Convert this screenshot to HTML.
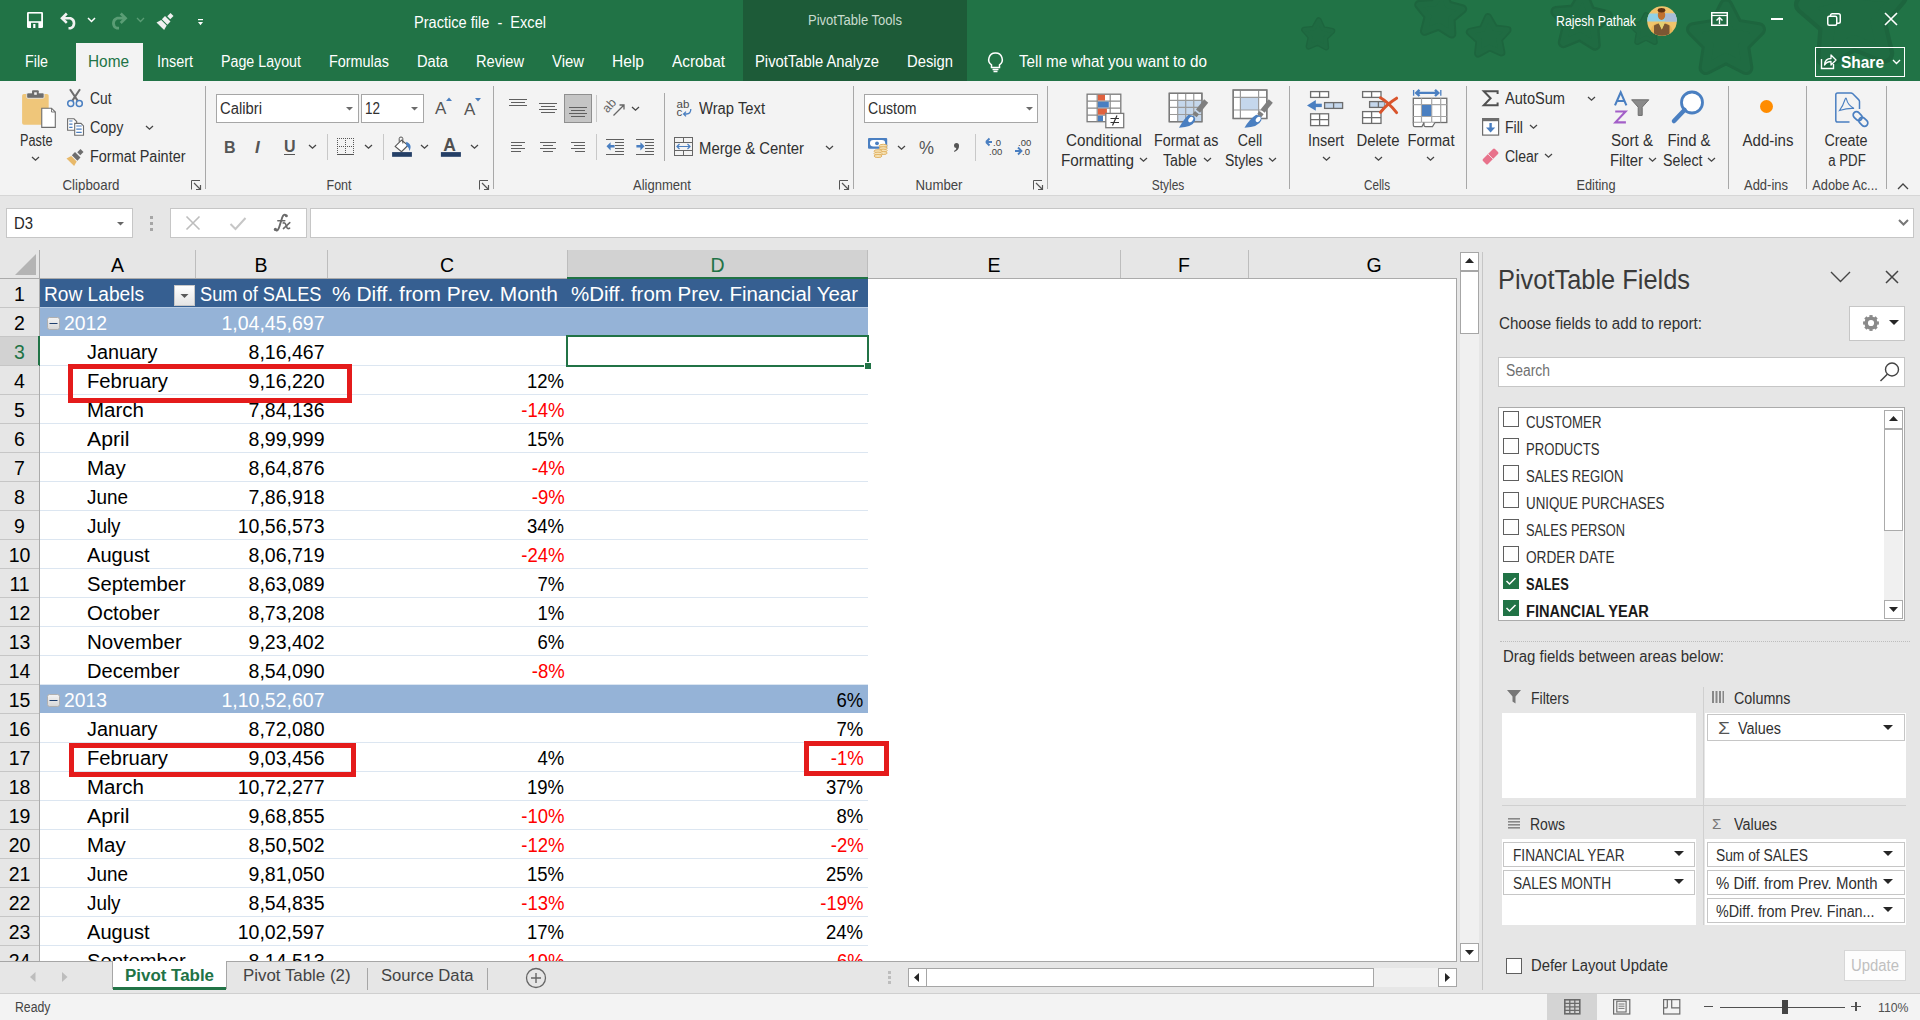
<!DOCTYPE html><html><head><meta charset="utf-8"><title>Practice file - Excel</title><style>
html,body{margin:0;padding:0;width:1920px;height:1020px;overflow:hidden;background:#e6e6e6;font-family:'Liberation Sans',sans-serif;}
.a{position:absolute;}
.t{white-space:pre;}
svg.a{overflow:visible;}
</style></head><body>
<div class="a" style="left:0px;top:0px;width:1920px;height:81px;background:#217346;"></div>
<svg class="a" style="left:960px;top:0px;overflow:hidden;" width="960" height="81" viewBox="0 0 960 81" ><g transform="translate(-960,0)"><path d="M1318.7,20.3 L1322.7,29.1 L1332.2,31.1 L1325.1,37.7 L1326.1,47.4 L1317.6,42.6 L1308.7,46.5 L1310.7,37.0 L1304.2,29.7 L1313.9,28.7Z" fill="#1e6840" stroke="#1d653e" stroke-width="6.1" stroke-linejoin="round"/><path d="M1318.7,20.3 L1322.7,29.1 L1332.2,31.1 L1325.1,37.7 L1326.1,47.4 L1317.6,42.6 L1308.7,46.5 L1310.7,37.0 L1304.2,29.7 L1313.9,28.7Z" fill="#1f6b42" stroke="#1f6b42" stroke-width="3.6" stroke-linejoin="round"/><path d="M1442.3,-8.8 L1447.8,5.2 L1462.4,9.1 L1450.8,18.7 L1451.6,33.8 L1438.8,25.7 L1424.7,31.1 L1428.5,16.5 L1419.0,4.8 L1434.1,3.8Z" fill="#1e6840" stroke="#1d653e" stroke-width="9.5" stroke-linejoin="round"/><path d="M1442.3,-8.8 L1447.8,5.2 L1462.4,9.1 L1450.8,18.7 L1451.6,33.8 L1438.8,25.7 L1424.7,31.1 L1428.5,16.5 L1419.0,4.8 L1434.1,3.8Z" fill="#1f6b42" stroke="#1f6b42" stroke-width="5.6" stroke-linejoin="round"/><path d="M1488.0,17.3 L1494.5,28.6 L1507.4,30.0 L1498.7,39.6 L1501.3,52.3 L1489.5,47.1 L1478.2,53.5 L1479.6,40.6 L1470.0,31.9 L1482.7,29.2Z" fill="#1e6840" stroke="#1d653e" stroke-width="8.2" stroke-linejoin="round"/><path d="M1488.0,17.3 L1494.5,28.6 L1507.4,30.0 L1498.7,39.6 L1501.3,52.3 L1489.5,47.1 L1478.2,53.5 L1479.6,40.6 L1470.0,31.9 L1482.7,29.2Z" fill="#1f6b42" stroke="#1f6b42" stroke-width="4.8" stroke-linejoin="round"/><path d="M1583.2,-5.0 L1590.0,11.5 L1607.3,15.7 L1593.8,27.3 L1595.1,45.1 L1579.9,35.8 L1563.4,42.6 L1567.5,25.2 L1556.0,11.6 L1573.8,10.2Z" fill="#1e6840" stroke="#1d653e" stroke-width="11.2" stroke-linejoin="round"/><path d="M1583.2,-5.0 L1590.0,11.5 L1607.3,15.7 L1593.8,27.3 L1595.1,45.1 L1579.9,35.8 L1563.4,42.6 L1567.5,25.2 L1556.0,11.6 L1573.8,10.2Z" fill="#1f6b42" stroke="#1f6b42" stroke-width="6.6" stroke-linejoin="round"/><path d="M1646.0,15.2 L1650.4,23.9 L1660.0,25.4 L1653.2,32.3 L1654.7,41.9 L1646.0,37.6 L1637.3,41.9 L1638.8,32.3 L1632.0,25.4 L1641.6,23.9Z" fill="#1e6840" stroke="#1d653e" stroke-width="6.1" stroke-linejoin="round"/><path d="M1646.0,15.2 L1650.4,23.9 L1660.0,25.4 L1653.2,32.3 L1654.7,41.9 L1646.0,37.6 L1637.3,41.9 L1638.8,32.3 L1632.0,25.4 L1641.6,23.9Z" fill="#1f6b42" stroke="#1f6b42" stroke-width="3.6" stroke-linejoin="round"/><path d="M1726.0,5.6 L1736.4,25.7 L1758.8,29.4 L1742.8,45.5 L1746.2,67.9 L1726.0,57.6 L1705.8,67.9 L1709.2,45.5 L1693.2,29.4 L1715.6,25.7Z" fill="#1e6840" stroke="#1d653e" stroke-width="14.3" stroke-linejoin="round"/><path d="M1726.0,5.6 L1736.4,25.7 L1758.8,29.4 L1742.8,45.5 L1746.2,67.9 L1726.0,57.6 L1705.8,67.9 L1709.2,45.5 L1693.2,29.4 L1715.6,25.7Z" fill="#1f6b42" stroke="#1f6b42" stroke-width="8.4" stroke-linejoin="round"/><path d="M1848.1,-33.0 L1865.1,-5.5 L1897.4,-2.9 L1876.5,21.8 L1884.0,53.4 L1854.0,41.1 L1826.4,58.0 L1828.7,25.7 L1804.1,4.6 L1835.6,-3.1Z" fill="#1e6840" stroke="#1d653e" stroke-width="20.4" stroke-linejoin="round"/><path d="M1848.1,-33.0 L1865.1,-5.5 L1897.4,-2.9 L1876.5,21.8 L1884.0,53.4 L1854.0,41.1 L1826.4,58.0 L1828.7,25.7 L1804.1,4.6 L1835.6,-3.1Z" fill="#1f6b42" stroke="#1f6b42" stroke-width="12.0" stroke-linejoin="round"/></g></svg>
<div class="a" style="left:743px;top:0px;width:224px;height:81px;background:#1d5b38;"></div>
<div class="a t" id="f0" style="top:13.00px;font-size:14px;line-height:14px;color:#c9dccf;left:855px;transform:translateX(-50%) scaleX(0.9314);transform-origin:center;">PivotTable Tools</div>
<svg class="a" style="left:27px;top:12px;" width="16" height="16" viewBox="0 0 16 16" ><rect x="0" y="0" width="16" height="16" rx="1.2" fill="#fff"/><rect x="1.8" y="1.6" width="12.4" height="7.6" fill="#217346"/><rect x="4" y="10.8" width="7.4" height="5.2" fill="#217346"/><rect x="6.2" y="12" width="2.2" height="4" fill="#fff"/></svg>
<svg class="a" style="left:60px;top:12px;" width="19" height="17" viewBox="0 0 19 17" ><path d="M2.5,6.2 H10.5 A5.3,5.3 0 0 1 10.5,16.2 H8.5" fill="none" stroke="#f2f2f2" stroke-width="2.6"/><path d="M6.8,1.5 L2,6.2 L6.8,10.9" fill="none" stroke="#f2f2f2" stroke-width="2.6"/></svg>
<svg class="a" style="left:87px;top:16.5px;" width="10" height="6" viewBox="0 0 10 6" ><path d="M1,1 L4.5,4.5 L8,1" fill="none" stroke="#fff" stroke-width="1.5"/></svg>
<svg class="a" style="left:108px;top:12px;" width="20" height="17" viewBox="0 0 20 17" ><path d="M17,6.2 H9 A5.3,5.3 0 0 0 9,16.2 H11" fill="none" stroke="#5a9d75" stroke-width="2.8"/><path d="M12.7,1.5 L17.5,6.2 L12.7,10.9" fill="none" stroke="#5a9d75" stroke-width="2.8"/></svg>
<svg class="a" style="left:135.5px;top:16.5px;" width="10" height="6" viewBox="0 0 10 6" ><path d="M1,1 L4.5,4.5 L8,1" fill="none" stroke="#5a9d75" stroke-width="1.3"/></svg>
<svg class="a" style="left:157px;top:12px;" width="18" height="16" viewBox="0 0 18 16" ><g transform="translate(9.2,8.4) rotate(-45)"><path d="M-8.3,-5.4 L-3.2,-3.9 V3.9 L-8.3,5.4 Z" fill="#f0f0f0"/><rect x="-2.2" y="-3.9" width="4.4" height="7.8" fill="#f0f0f0"/><rect x="3.6" y="-2.1" width="4.6" height="4.2" fill="#f0f0f0"/></g></svg>
<svg class="a" style="left:197px;top:18px;" width="7" height="8" viewBox="0 0 7 8" ><rect x="1" y="1" width="5" height="1.2" fill="#fff"/><path d="M1,4 H6 L3.5,7.2 Z" fill="#fff"/></svg>
<div class="a t" id="f1" style="top:14.00px;font-size:16.5px;line-height:16.5px;color:#fff;left:414px;transform:scaleX(0.8831);transform-origin:left;">Practice file  -  Excel</div>
<div class="a t" id="f2" style="top:14.00px;font-size:14px;line-height:14px;color:#fff;left:1556px;transform:scaleX(0.8785);transform-origin:left;">Rajesh Pathak</div>
<svg class="a" style="left:1647px;top:6px;" width="30" height="30" viewBox="0 0 30 30" ><defs><clipPath id="cav"><circle cx="15" cy="15" r="14.8"/></clipPath></defs><g clip-path="url(#cav)"><rect width="30" height="30" fill="#f0c46c"/><rect x="0" y="7.5" width="30" height="8" fill="#8fd0e6"/><rect x="18" y="7.5" width="12" height="8" fill="#a9bcd6"/><path d="M3,30 Q3,18.5 10,17 H19 Q26,18.5 26,30 Z" fill="#e9b456"/><path d="M7,30 V19.5 Q9.5,18 12,17.5 L14.8,23.5 L17.5,17.5 Q20,18 22.5,19.5 V30 Z" fill="#7b5733"/><path d="M11.5,16.5 L14.8,23.5 L18,16.5 Z" fill="#e2cf72"/><ellipse cx="14.5" cy="9" rx="3.7" ry="5" fill="#c0702e"/><ellipse cx="14.5" cy="4.2" rx="3.8" ry="2.2" fill="#5b3212"/></g></svg>
<svg class="a" style="left:1711px;top:12px;" width="17" height="14" viewBox="0 0 17 14" ><rect x="0.75" y="0.75" width="15.5" height="12.5" fill="none" stroke="#fff" stroke-width="1.5"/><path d="M0.75,3.5 H16" stroke="#fff" stroke-width="1.2"/><path d="M8.5,12 V6 M5.5,8.5 L8.5,5.5 L11.5,8.5" fill="none" stroke="#fff" stroke-width="1.4"/></svg>
<div class="a" style="left:1771px;top:18px;width:12px;height:1.5px;background:#fff;"></div>
<svg class="a" style="left:1827px;top:13px;" width="14" height="13" viewBox="0 0 14 13" ><rect x="0.75" y="3.25" width="9" height="9" fill="none" stroke="#fff" stroke-width="1.5" rx="1.5"/><path d="M3.5,3 V2.5 A1.75,1.75 0 0 1 5.25,0.75 H11.5 A1.75,1.75 0 0 1 13.25,2.5 V8.5 A1.75,1.75 0 0 1 11.5,10.25 H10" fill="none" stroke="#fff" stroke-width="1.5"/></svg>
<svg class="a" style="left:1884px;top:12px;" width="14" height="14" viewBox="0 0 14 14" ><path d="M1,1 L13,13 M13,1 L1,13" stroke="#fff" stroke-width="1.6"/></svg>
<div class="a" style="left:76px;top:43px;width:67px;height:38px;background:#f3f3f3;"></div>
<div class="a t" id="f3" style="top:54.00px;font-size:16px;line-height:16px;color:#fff;left:25px;transform:scaleX(0.8921);transform-origin:left;">File</div>
<div class="a t" id="f4" style="top:54.00px;font-size:16px;line-height:16px;color:#217346;left:88px;transform:scaleX(0.9605);transform-origin:left;">Home</div>
<div class="a t" id="f5" style="top:54.00px;font-size:16px;line-height:16px;color:#fff;left:157px;transform:scaleX(0.8996);transform-origin:left;">Insert</div>
<div class="a t" id="f6" style="top:54.00px;font-size:16px;line-height:16px;color:#fff;left:221px;transform:scaleX(0.8903);transform-origin:left;">Page Layout</div>
<div class="a t" id="f7" style="top:54.00px;font-size:16px;line-height:16px;color:#fff;left:329px;transform:scaleX(0.8997);transform-origin:left;">Formulas</div>
<div class="a t" id="f8" style="top:54.00px;font-size:16px;line-height:16px;color:#fff;left:417px;transform:scaleX(0.9172);transform-origin:left;">Data</div>
<div class="a t" id="f9" style="top:54.00px;font-size:16px;line-height:16px;color:#fff;left:476px;transform:scaleX(0.9148);transform-origin:left;">Review</div>
<div class="a t" id="f10" style="top:54.00px;font-size:16px;line-height:16px;color:#fff;left:552px;transform:scaleX(0.9305);transform-origin:left;">View</div>
<div class="a t" id="f11" style="top:54.00px;font-size:16px;line-height:16px;color:#fff;left:612px;transform:scaleX(0.9725);transform-origin:left;">Help</div>
<div class="a t" id="f12" style="top:54.00px;font-size:16px;line-height:16px;color:#fff;left:672px;transform:scaleX(0.9612);transform-origin:left;">Acrobat</div>
<div class="a t" id="f13" style="top:54.00px;font-size:16px;line-height:16px;color:#fff;left:755px;transform:scaleX(0.9232);transform-origin:left;">PivotTable Analyze</div>
<div class="a t" id="f14" style="top:54.00px;font-size:16px;line-height:16px;color:#fff;left:907px;transform:scaleX(0.9235);transform-origin:left;">Design</div>
<svg class="a" style="left:987px;top:52px;" width="17" height="21" viewBox="0 0 17 21" ><path d="M8.5,1 A6.5,6.5 0 0 0 4.5,12.8 V15.5 H12.5 V12.8 A6.5,6.5 0 0 0 8.5,1 Z" fill="none" stroke="#fff" stroke-width="1.5"/><path d="M5.5,17.5 H11.5 M6.5,19.5 H10.5" stroke="#fff" stroke-width="1.4"/></svg>
<div class="a t" id="f15" style="top:54.00px;font-size:16px;line-height:16px;color:#fff;left:1019px;transform:scaleX(0.9522);transform-origin:left;">Tell me what you want to do</div>
<div class="a" style="left:1815px;top:47px;width:90px;height:30px;border:1px solid #fff;box-sizing:border-box;"></div>
<svg class="a" style="left:1820px;top:53px;" width="17" height="17" viewBox="0 0 17 17" ><path d="M1.5,6 V15.5 H13.5 V11" fill="none" stroke="#fff" stroke-width="1.4"/><path d="M4.5,12 Q5,5.5 11,5.5 V2 L16,7 L11,12 V8.5 Q7,8.5 4.5,12 Z" fill="none" stroke="#fff" stroke-width="1.3" stroke-linejoin="round"/></svg>
<div class="a t" id="f16" style="top:54.00px;font-size:17px;line-height:17px;color:#fff;font-weight:700;left:1841px;transform:scaleX(0.9101);transform-origin:left;">Share</div>
<svg class="a" style="left:1892px;top:59px;" width="9" height="6" viewBox="0 0 9 6" ><path d="M1,1 L4.5,4.5 L8,1" fill="none" stroke="#fff" stroke-width="1.4"/></svg>
<div class="a" style="left:0px;top:81px;width:1920px;height:114px;background:#f3f3f3;"></div>
<div class="a" style="left:0px;top:195px;width:1920px;height:1px;background:#d6d6d6;"></div>
<div class="a" style="left:205px;top:86px;width:1px;height:103px;background:#a8a8a8;"></div>
<div class="a" style="left:493px;top:86px;width:1px;height:103px;background:#a8a8a8;"></div>
<div class="a" style="left:853px;top:86px;width:1px;height:103px;background:#a8a8a8;"></div>
<div class="a" style="left:1047px;top:86px;width:1px;height:103px;background:#a8a8a8;"></div>
<div class="a" style="left:1289px;top:86px;width:1px;height:103px;background:#a8a8a8;"></div>
<div class="a" style="left:1466px;top:86px;width:1px;height:103px;background:#a8a8a8;"></div>
<div class="a" style="left:1728px;top:86px;width:1px;height:103px;background:#a8a8a8;"></div>
<div class="a" style="left:1806px;top:86px;width:1px;height:103px;background:#a8a8a8;"></div>
<div class="a" style="left:1886px;top:86px;width:1px;height:103px;background:#a8a8a8;"></div>
<div class="a t" id="f17" style="top:178.00px;font-size:14.5px;line-height:14.5px;color:#444444;left:91px;transform:translateX(-50%) scaleX(0.9182);transform-origin:center;">Clipboard</div>
<div class="a t" id="f18" style="top:178.00px;font-size:14.5px;line-height:14.5px;color:#444444;left:338.5px;transform:translateX(-50%) scaleX(0.8616);transform-origin:center;">Font</div>
<div class="a t" id="f19" style="top:178.00px;font-size:14.5px;line-height:14.5px;color:#444444;left:662px;transform:translateX(-50%) scaleX(0.8994);transform-origin:center;">Alignment</div>
<div class="a t" id="f20" style="top:178.00px;font-size:14.5px;line-height:14.5px;color:#444444;left:939px;transform:translateX(-50%) scaleX(0.9112);transform-origin:center;">Number</div>
<div class="a t" id="f21" style="top:178.00px;font-size:14.5px;line-height:14.5px;color:#444444;left:1167.5px;transform:translateX(-50%) scaleX(0.8228);transform-origin:center;">Styles</div>
<div class="a t" id="f22" style="top:178.00px;font-size:14.5px;line-height:14.5px;color:#444444;left:1376.5px;transform:translateX(-50%) scaleX(0.8066);transform-origin:center;">Cells</div>
<div class="a t" id="f23" style="top:178.00px;font-size:14.5px;line-height:14.5px;color:#444444;left:1596px;transform:translateX(-50%) scaleX(0.8795);transform-origin:center;">Editing</div>
<div class="a t" id="f24" style="top:178.00px;font-size:14.5px;line-height:14.5px;color:#444444;left:1766px;transform:translateX(-50%) scaleX(0.8948);transform-origin:center;">Add-ins</div>
<div class="a t" id="f25" style="top:178.00px;font-size:14.5px;line-height:14.5px;color:#444444;left:1845px;transform:translateX(-50%) scaleX(0.8831);transform-origin:center;">Adobe Ac...</div>
<svg class="a" style="left:191px;top:180px;" width="11" height="10" viewBox="0 0 11 10" ><path d="M0.5,9.5 V0.5 H9" fill="none" stroke="#555" stroke-width="1"/><path d="M3,3 L9,9 M5,9.5 H9.5 V5" fill="none" stroke="#555" stroke-width="1.2"/></svg>
<svg class="a" style="left:479px;top:180px;" width="11" height="10" viewBox="0 0 11 10" ><path d="M0.5,9.5 V0.5 H9" fill="none" stroke="#555" stroke-width="1"/><path d="M3,3 L9,9 M5,9.5 H9.5 V5" fill="none" stroke="#555" stroke-width="1.2"/></svg>
<svg class="a" style="left:839px;top:180px;" width="11" height="10" viewBox="0 0 11 10" ><path d="M0.5,9.5 V0.5 H9" fill="none" stroke="#555" stroke-width="1"/><path d="M3,3 L9,9 M5,9.5 H9.5 V5" fill="none" stroke="#555" stroke-width="1.2"/></svg>
<svg class="a" style="left:1033px;top:180px;" width="11" height="10" viewBox="0 0 11 10" ><path d="M0.5,9.5 V0.5 H9" fill="none" stroke="#555" stroke-width="1"/><path d="M3,3 L9,9 M5,9.5 H9.5 V5" fill="none" stroke="#555" stroke-width="1.2"/></svg>
<svg class="a" style="left:1897px;top:183px;" width="12" height="7" viewBox="0 0 12 7" ><path d="M1,6 L6,1 L11,6" fill="none" stroke="#444" stroke-width="1.3"/></svg>
<svg class="a" style="left:20px;top:88px;" width="38" height="42" viewBox="0 0 38 42" ><rect x="2.1" y="6" width="26.6" height="30.8" rx="1.8" fill="#efc67a"/><rect x="6.7" y="4.9" width="17.4" height="5.4" rx="1.2" fill="#6d6d6d" stroke="#f3f3f3" stroke-width="0.8"/><rect x="12" y="2.2" width="6.75" height="4.5" rx="1" fill="#6d6d6d"/><rect x="14.2" y="4.3" width="2.6" height="2.5" fill="#f3f3f3"/><path d="M21.75,20.2 H31.5 L35.3,24 V39.4 H21.75 Z" fill="#fff" stroke="#6d6d6d" stroke-width="1.1"/><path d="M31.5,20.2 V24 H35.3" fill="none" stroke="#6d6d6d" stroke-width="0.9"/></svg>
<div class="a t" id="f26" style="top:133.00px;font-size:16px;line-height:16px;color:#303030;left:19.5px;transform:scaleX(0.7942);transform-origin:left;">Paste</div>
<svg class="a" style="left:31px;top:156px;" width="9" height="6" viewBox="0 0 9 6" ><path d="M1,1 L4.5,4.15 L8,1" fill="none" stroke="#444" stroke-width="1.3"/></svg>
<svg class="a" style="left:66px;top:88px;" width="18" height="20" viewBox="0 0 18 20" ><path d="M4,1.2 L11.6,12.6 M14,1.2 L6.4,12.6" stroke="#6d6d6d" stroke-width="2"/><circle cx="4.7" cy="15.5" r="3" fill="none" stroke="#4a7fc1" stroke-width="1.5"/><circle cx="13.3" cy="15.5" r="3" fill="none" stroke="#4a7fc1" stroke-width="1.5"/></svg>
<div class="a t" id="f27" style="top:91.00px;font-size:16px;line-height:16px;color:#303030;left:90px;transform:scaleX(0.8632);transform-origin:left;">Cut</div>
<svg class="a" style="left:66px;top:117px;" width="19" height="20" viewBox="0 0 19 20" ><path d="M1.6,1.8 H8 L10.7,4.5 V13.2 H1.6 Z" fill="#fff" stroke="#6d6d6d" stroke-width="1.1"/><path d="M8.7,6.4 H15 L17.5,8.9 V18.2 H8.7 Z" fill="#fff" stroke="#6d6d6d" stroke-width="1.1"/><path d="M3.2,4 H6.5 M3.2,7.2 H6.5 M3.2,10.3 H6.5 M10.25,9 H15.7 M10.25,12.2 H15.7 M10.25,15.3 H15.7" stroke="#4a7fc1" stroke-width="1.2"/></svg>
<div class="a t" id="f28" style="top:120.00px;font-size:16px;line-height:16px;color:#303030;left:90px;transform:scaleX(0.8967);transform-origin:left;">Copy</div>
<svg class="a" style="left:145px;top:125px;" width="9" height="6" viewBox="0 0 9 6" ><path d="M1,1 L4.5,4.15 L8,1" fill="none" stroke="#444" stroke-width="1.3"/></svg>
<svg class="a" style="left:66.6px;top:147.5px;" width="18" height="16" viewBox="0 0 18 16" ><g transform="translate(9.2,8.4) rotate(-45)"><path d="M-8.3,-5.4 L-3.2,-3.9 V3.9 L-8.3,5.4 Z" fill="#e8b96a"/><rect x="-2.2" y="-3.9" width="4.4" height="7.8" fill="#6d6d6d"/><rect x="3.6" y="-2.1" width="4.6" height="4.2" fill="#6d6d6d"/></g></svg>
<div class="a t" id="f29" style="top:149.00px;font-size:16px;line-height:16px;color:#303030;left:90px;transform:scaleX(0.9025);transform-origin:left;">Format Painter</div>
<div class="a" style="left:216px;top:94px;width:143px;height:29px;background:#fff;border:1px solid #a6a6a6;box-sizing:border-box;"></div>
<div class="a t" id="f30" style="top:101.00px;font-size:16px;line-height:16px;color:#303030;left:219.5px;transform:scaleX(0.9263);transform-origin:left;">Calibri</div>
<svg class="a" style="left:346px;top:107px;" width="8" height="4" viewBox="0 0 8 4" ><path d="M0,0 H7 L3.5,3.5 Z" fill="#6b6b6b"/></svg>
<div class="a" style="left:361px;top:94px;width:63px;height:29px;background:#fff;border:1px solid #a6a6a6;box-sizing:border-box;"></div>
<div class="a t" id="f31" style="top:101.00px;font-size:16px;line-height:16px;color:#303030;left:365px;transform:scaleX(0.8428);transform-origin:left;">12</div>
<svg class="a" style="left:411px;top:107px;" width="8" height="4" viewBox="0 0 8 4" ><path d="M0,0 H7 L3.5,3.5 Z" fill="#6b6b6b"/></svg>
<svg class="a" style="left:434px;top:97px;" width="18" height="18" viewBox="0 0 18 18" ><text x="1" y="17" font-family="Liberation Sans" font-size="17" fill="#555">A</text><path d="M12,4 L15,0.5 L18,4 Z" fill="#4a7fc1"/></svg>
<svg class="a" style="left:463px;top:97px;" width="18" height="18" viewBox="0 0 18 18" ><text x="1" y="17.5" font-family="Liberation Sans" font-size="17" fill="#555">A</text><path d="M12,1 L15,4.5 L18,1 Z" fill="#4a7fc1"/></svg>
<div class="a t" style="top:139.50px;font-size:16px;line-height:16px;color:#555;font-weight:700;left:224px;">B</div>
<div class="a t" style="top:138.50px;font-size:17px;line-height:17px;color:#555;font-weight:700;left:255px;font-style:italic;font-family:"Liberation Serif";">I</div>
<div class="a t" style="top:138.50px;font-size:16px;line-height:16px;color:#555;font-weight:700;left:284px;">U</div>
<div class="a" style="left:284px;top:154px;width:11px;height:1.3px;background:#555;"></div>
<svg class="a" style="left:308px;top:144px;" width="9" height="6" viewBox="0 0 9 6" ><path d="M1,1 L4.5,4.15 L8,1" fill="none" stroke="#444" stroke-width="1.3"/></svg>
<div class="a" style="left:327px;top:134px;width:1px;height:26px;background:#c8c8c8;"></div>
<svg class="a" style="left:336px;top:137px;" width="20" height="19" viewBox="0 0 20 19" ><rect x="1" y="1" width="1" height="1" fill="#555"/><rect x="1" y="9" width="1" height="1" fill="#555"/><rect x="3" y="1" width="1" height="1" fill="#555"/><rect x="3" y="9" width="1" height="1" fill="#555"/><rect x="5" y="1" width="1" height="1" fill="#555"/><rect x="5" y="9" width="1" height="1" fill="#555"/><rect x="7" y="1" width="1" height="1" fill="#555"/><rect x="7" y="9" width="1" height="1" fill="#555"/><rect x="9" y="1" width="1" height="1" fill="#555"/><rect x="9" y="9" width="1" height="1" fill="#555"/><rect x="11" y="1" width="1" height="1" fill="#555"/><rect x="11" y="9" width="1" height="1" fill="#555"/><rect x="13" y="1" width="1" height="1" fill="#555"/><rect x="13" y="9" width="1" height="1" fill="#555"/><rect x="15" y="1" width="1" height="1" fill="#555"/><rect x="15" y="9" width="1" height="1" fill="#555"/><rect x="17" y="1" width="1" height="1" fill="#555"/><rect x="17" y="9" width="1" height="1" fill="#555"/><rect x="1" y="3" width="1" height="1" fill="#555"/><rect x="9" y="3" width="1" height="1" fill="#555"/><rect x="17" y="3" width="1" height="1" fill="#555"/><rect x="1" y="5" width="1" height="1" fill="#555"/><rect x="9" y="5" width="1" height="1" fill="#555"/><rect x="17" y="5" width="1" height="1" fill="#555"/><rect x="1" y="7" width="1" height="1" fill="#555"/><rect x="9" y="7" width="1" height="1" fill="#555"/><rect x="17" y="7" width="1" height="1" fill="#555"/><rect x="1" y="9" width="1" height="1" fill="#555"/><rect x="9" y="9" width="1" height="1" fill="#555"/><rect x="17" y="9" width="1" height="1" fill="#555"/><rect x="1" y="11" width="1" height="1" fill="#555"/><rect x="9" y="11" width="1" height="1" fill="#555"/><rect x="17" y="11" width="1" height="1" fill="#555"/><rect x="1" y="13" width="1" height="1" fill="#555"/><rect x="9" y="13" width="1" height="1" fill="#555"/><rect x="17" y="13" width="1" height="1" fill="#555"/><rect x="1" y="15" width="1" height="1" fill="#555"/><rect x="9" y="15" width="1" height="1" fill="#555"/><rect x="17" y="15" width="1" height="1" fill="#555"/><rect x="1" y="17" width="17" height="1" fill="#555"/></svg>
<svg class="a" style="left:364px;top:144px;" width="9" height="6" viewBox="0 0 9 6" ><path d="M1,1 L4.5,4.15 L8,1" fill="none" stroke="#444" stroke-width="1.3"/></svg>
<div class="a" style="left:383px;top:134px;width:1px;height:26px;background:#c8c8c8;"></div>
<svg class="a" style="left:391px;top:136px;" width="22" height="22" viewBox="0 0 22 22" ><path d="M4.2,10.4 L10.5,4.2 L17.1,9.2 L10.5,15.7 Z" fill="#fff" stroke="#555" stroke-width="1.1"/><path d="M8.2,5.8 V2.6 Q8.2,1 10,1 Q11.8,1 11.8,2.6 V7.5" fill="none" stroke="#555" stroke-width="1"/><path d="M15.2,5.7 Q19.8,7.5 19.6,11 Q19.4,13.5 18.5,15 Q18.2,11.5 15.2,9.2 Z" fill="#4a7fc1"/><rect x="1.1" y="16.1" width="19.8" height="4.7" fill="#243f66"/></svg>
<svg class="a" style="left:420px;top:144px;" width="9" height="6" viewBox="0 0 9 6" ><path d="M1,1 L4.5,4.15 L8,1" fill="none" stroke="#444" stroke-width="1.3"/></svg>
<svg class="a" style="left:440px;top:136px;" width="22" height="22" viewBox="0 0 22 22" ><text x="3.3" y="14.8" font-family="Liberation Sans" font-weight="bold" font-size="17.5" fill="#505050">A</text><rect x="0.9" y="16.1" width="20" height="4.7" fill="#243f66"/></svg>
<svg class="a" style="left:469.5px;top:144px;" width="9" height="6" viewBox="0 0 9 6" ><path d="M1,1 L4.5,4.15 L8,1" fill="none" stroke="#444" stroke-width="1.3"/></svg>
<div class="a" style="left:509px;top:99px;width:18px;height:1px;background:#5f5f5f;"></div>
<div class="a" style="left:511px;top:102px;width:14px;height:1px;background:#5f5f5f;"></div>
<div class="a" style="left:509px;top:105px;width:18px;height:1px;background:#5f5f5f;"></div>
<div class="a" style="left:539px;top:103px;width:18px;height:1px;background:#5f5f5f;"></div>
<div class="a" style="left:541px;top:106px;width:14px;height:1px;background:#5f5f5f;"></div>
<div class="a" style="left:539px;top:109px;width:18px;height:1px;background:#5f5f5f;"></div>
<div class="a" style="left:541px;top:112px;width:14px;height:1px;background:#5f5f5f;"></div>
<div class="a" style="left:564px;top:94px;width:28px;height:29px;background:#c5c5c5;border:1px solid #8f8f8f;box-sizing:border-box;"></div>
<div class="a" style="left:569px;top:107px;width:18px;height:1px;background:#5f5f5f;"></div>
<div class="a" style="left:571px;top:110px;width:14px;height:1px;background:#5f5f5f;"></div>
<div class="a" style="left:569px;top:113px;width:18px;height:1px;background:#5f5f5f;"></div>
<div class="a" style="left:571px;top:116px;width:14px;height:1px;background:#5f5f5f;"></div>
<div class="a" style="left:596px;top:95px;width:1px;height:27px;background:#c8c8c8;"></div>
<svg class="a" style="left:603px;top:97px;" width="24" height="21" viewBox="0 0 24 21" ><text x="0" y="0" font-family="Liberation Sans" font-size="12.5" fill="#666" transform="translate(4.5,16.5) rotate(-48)">ab</text><path d="M10.5,18.5 L21,8 M16.5,8 H21 V12.5" fill="none" stroke="#666" stroke-width="1.3"/></svg>
<svg class="a" style="left:631px;top:106px;" width="9" height="6" viewBox="0 0 9 6" ><path d="M1,1 L4.5,4.15 L8,1" fill="none" stroke="#444" stroke-width="1.3"/></svg>
<div class="a" style="left:664px;top:93px;width:1px;height:68px;background:#a8a8a8;"></div>
<svg class="a" style="left:675px;top:97px;" width="19" height="21" viewBox="0 0 19 21" ><text x="1.5" y="10.5" font-family="Liberation Sans" font-size="11.5" fill="#4a4a4a">ab</text><text x="1.5" y="18.5" font-family="Liberation Sans" font-size="11.5" fill="#4a4a4a">c</text><path d="M15.8,12 Q15.8,17 11.5,17 H9 M11,14.6 L8.6,17 L11,19.4" fill="none" stroke="#4a7fc1" stroke-width="1.3"/></svg>
<div class="a t" id="f32" style="top:101.00px;font-size:16px;line-height:16px;color:#303030;left:698.5px;transform:scaleX(0.9239);transform-origin:left;">Wrap Text</div>
<div class="a" style="left:511px;top:142px;width:14px;height:1px;background:#5f5f5f;"></div>
<div class="a" style="left:511px;top:145px;width:11px;height:1px;background:#5f5f5f;"></div>
<div class="a" style="left:511px;top:148px;width:14px;height:1px;background:#5f5f5f;"></div>
<div class="a" style="left:511px;top:151px;width:10px;height:1px;background:#5f5f5f;"></div>
<div class="a" style="left:540px;top:142px;width:16px;height:1px;background:#5f5f5f;"></div>
<div class="a" style="left:543px;top:145px;width:10px;height:1px;background:#5f5f5f;"></div>
<div class="a" style="left:540px;top:148px;width:16px;height:1px;background:#5f5f5f;"></div>
<div class="a" style="left:543px;top:151px;width:10px;height:1px;background:#5f5f5f;"></div>
<div class="a" style="left:571px;top:142px;width:14px;height:1px;background:#5f5f5f;"></div>
<div class="a" style="left:574px;top:145px;width:11px;height:1px;background:#5f5f5f;"></div>
<div class="a" style="left:571px;top:148px;width:14px;height:1px;background:#5f5f5f;"></div>
<div class="a" style="left:575px;top:151px;width:10px;height:1px;background:#5f5f5f;"></div>
<div class="a" style="left:596px;top:134px;width:1px;height:26px;background:#c8c8c8;"></div>
<div class="a" style="left:606px;top:139px;width:18px;height:1px;background:#5f5f5f;"></div>
<div class="a" style="left:606px;top:154px;width:18px;height:1px;background:#5f5f5f;"></div>
<div class="a" style="left:615px;top:142px;width:9px;height:1px;background:#5f5f5f;"></div>
<div class="a" style="left:615px;top:145px;width:9px;height:1px;background:#5f5f5f;"></div>
<div class="a" style="left:615px;top:148px;width:9px;height:1px;background:#5f5f5f;"></div>
<div class="a" style="left:615px;top:151px;width:9px;height:1px;background:#5f5f5f;"></div>
<svg class="a" style="left:606px;top:141px;" width="9" height="11" viewBox="0 0 9 11" ><path d="M0.5,5.2 L4.6,1.2 V4 H8.6 V6.6 H4.6 V9.4 Z" fill="#4a7fc1"/></svg>
<div class="a" style="left:636px;top:139px;width:18px;height:1px;background:#5f5f5f;"></div>
<div class="a" style="left:636px;top:154px;width:18px;height:1px;background:#5f5f5f;"></div>
<div class="a" style="left:645px;top:142px;width:9px;height:1px;background:#5f5f5f;"></div>
<div class="a" style="left:645px;top:145px;width:9px;height:1px;background:#5f5f5f;"></div>
<div class="a" style="left:645px;top:148px;width:9px;height:1px;background:#5f5f5f;"></div>
<div class="a" style="left:645px;top:151px;width:9px;height:1px;background:#5f5f5f;"></div>
<svg class="a" style="left:636px;top:141px;" width="9" height="11" viewBox="0 0 9 11" ><path d="M8.5,5.2 L4.4,1.2 V4 H0.4 V6.6 H4.4 V9.4 Z" fill="#4a7fc1"/></svg>
<svg class="a" style="left:674px;top:137px;" width="20" height="20" viewBox="0 0 20 20" ><rect x="0.5" y="0.5" width="18" height="18" fill="none" stroke="#666" stroke-width="1"/><path d="M0.5,5.5 H18.5 M0.5,13.5 H18.5 M9.5,0.5 V5.5 M9.5,13.5 V18.5" stroke="#666" stroke-width="1"/><rect x="1" y="6" width="17" height="7" fill="#f3f3f3"/><path d="M3,9.5 H16 M5.5,7 L3,9.5 L5.5,12 M13.5,7 L16,9.5 L13.5,12" fill="none" stroke="#4a7fc1" stroke-width="1.2"/></svg>
<div class="a t" id="f33" style="top:140.50px;font-size:16px;line-height:16px;color:#303030;left:698.5px;transform:scaleX(0.9297);transform-origin:left;">Merge &amp; Center</div>
<svg class="a" style="left:825px;top:145px;" width="9" height="6" viewBox="0 0 9 6" ><path d="M1,1 L4.5,4.15 L8,1" fill="none" stroke="#444" stroke-width="1.3"/></svg>
<div class="a" style="left:864px;top:94px;width:174px;height:29px;background:#fff;border:1px solid #a6a6a6;box-sizing:border-box;"></div>
<div class="a t" id="f34" style="top:101.00px;font-size:16px;line-height:16px;color:#303030;left:867.5px;transform:scaleX(0.8798);transform-origin:left;">Custom</div>
<svg class="a" style="left:1026px;top:107px;" width="8" height="4" viewBox="0 0 8 4" ><path d="M0,0 H7 L3.5,3.5 Z" fill="#6b6b6b"/></svg>
<svg class="a" style="left:867px;top:137px;" width="22" height="22" viewBox="0 0 22 22" ><rect x="1" y="1" width="19.2" height="10.7" rx="1" fill="#4a7fc1"/><rect x="3" y="3" width="15.2" height="6.6" rx="3.3" fill="#fff"/><circle cx="10" cy="6.3" r="1.9" fill="#4a7fc1"/><ellipse cx="16.2" cy="8.8" rx="4" ry="1.5" fill="#f6e3b8" stroke="#e2b466" stroke-width="1"/><ellipse cx="16.2" cy="11.2" rx="4" ry="1.5" fill="#f6e3b8" stroke="#e2b466" stroke-width="1"/><ellipse cx="16.2" cy="13.6" rx="4" ry="1.5" fill="#f6e3b8" stroke="#e2b466" stroke-width="1"/><ellipse cx="16.2" cy="16.0" rx="4" ry="1.5" fill="#f6e3b8" stroke="#e2b466" stroke-width="1"/><ellipse cx="11" cy="14.2" rx="4" ry="1.5" fill="#f6e3b8" stroke="#e2b466" stroke-width="1"/><ellipse cx="11" cy="16.6" rx="4" ry="1.5" fill="#f6e3b8" stroke="#e2b466" stroke-width="1"/><ellipse cx="11" cy="19.0" rx="4" ry="1.5" fill="#f6e3b8" stroke="#e2b466" stroke-width="1"/></svg>
<svg class="a" style="left:897px;top:145px;" width="9" height="6" viewBox="0 0 9 6" ><path d="M1,1 L4.5,4.15 L8,1" fill="none" stroke="#444" stroke-width="1.3"/></svg>
<div class="a t" id="f35" style="top:137.50px;font-size:19px;line-height:19px;color:#555;left:919px;transform:scaleX(0.8872);transform-origin:left;">%</div>
<svg class="a" style="left:952px;top:142px;" width="8" height="11" viewBox="0 0 8 11" ><circle cx="4.5" cy="3.4" r="2.5" fill="#555"/><path d="M6.9,3.6 Q7.2,8.2 2.4,10 L2,8.9 Q4.6,7.6 4.4,5.4 Z" fill="#555"/></svg>
<div class="a" style="left:975px;top:134px;width:1px;height:27px;background:#c8c8c8;"></div>
<svg class="a" style="left:985px;top:138px;" width="18" height="18" viewBox="0 0 18 18" ><path d="M1,4 L4.5,0.5 M1,4 L4.5,7.5 M1,4 H7" fill="none" stroke="#4a7fc1" stroke-width="1.8"/><text x="8" y="8" font-family="Liberation Sans" font-size="9.5" fill="#444">.0</text><text x="4" y="17" font-family="Liberation Sans" font-size="9.5" fill="#444">.00</text></svg>
<svg class="a" style="left:1014px;top:138px;" width="19" height="18" viewBox="0 0 19 18" ><text x="4" y="8" font-family="Liberation Sans" font-size="9.5" fill="#444">.00</text><path d="M1,13 H7 M4,9.5 L7.5,13 L4,16.5" fill="none" stroke="#4a7fc1" stroke-width="1.8"/><text x="8" y="17" font-family="Liberation Sans" font-size="9.5" fill="#444">.0</text></svg>
<svg class="a" style="left:1086px;top:93px;" width="40" height="36" viewBox="0 0 40 36" ><rect x="1.1" y="1.2" width="33.7" height="27.5" fill="#fff" stroke="#7a7a7a" stroke-width="1.3"/><path d="M11.2,1.2 V28.7 M24.2,1.2 V28.7 M1.1,8.1 H34.8 M1.1,15.1 H34.8 M1.1,22.2 H34.8" stroke="#8a8a8a" stroke-width="1.2"/><rect x="11.9" y="1.8" width="7.1" height="5.7" fill="#e0623f"/><rect x="11.9" y="8.7" width="10.9" height="5.8" fill="#4a7fc1"/><rect x="11.9" y="15.7" width="9" height="5.9" fill="#e0623f"/><rect x="11.9" y="22.8" width="5.1" height="5.3" fill="#4a7fc1"/><rect x="19.8" y="20.4" width="17.9" height="14.3" fill="#fff" stroke="#7a7a7a" stroke-width="1.3"/><path d="M24.5,25.5 H33 M24.5,29.5 H33 M31,22.5 L26.5,32.5" stroke="#333" stroke-width="1.2" fill="none"/></svg>
<div class="a t" id="f36" style="top:133.00px;font-size:16px;line-height:16px;color:#303030;left:1104px;transform:translateX(-50%) scaleX(0.9493);transform-origin:center;">Conditional</div>
<div class="a t" id="f37" style="top:153.00px;font-size:16px;line-height:16px;color:#303030;left:1061px;transform:scaleX(0.9546);transform-origin:left;">Formatting</div>
<svg class="a" style="left:1139px;top:156.5px;" width="9" height="6" viewBox="0 0 9 6" ><path d="M1,1 L4.5,4.15 L8,1" fill="none" stroke="#444" stroke-width="1.3"/></svg>
<svg class="a" style="left:1168px;top:92px;" width="42" height="38" viewBox="0 0 42 38" ><rect x="1.3" y="1.3" width="32.6" height="28.4" fill="#fff" stroke="#7a7a7a" stroke-width="1.3"/><rect x="9.7" y="8.4" width="24.2" height="21.3" fill="#c5d7ec"/><path d="M9.7,1.3 V29.7 M17.7,1.3 V29.7 M25.75,1.3 V29.7 M1.3,8.4 H33.9 M1.3,15.4 H33.9 M1.3,22.5 H33.9" stroke="#9a9a9a" stroke-width="1.2"/><rect x="1.3" y="1.3" width="32.6" height="28.4" fill="none" stroke="#7a7a7a" stroke-width="1.3"/><path d="M38.2,9 L30,19.2" stroke="#7f7f7f" stroke-width="5.2"/><path d="M29,20.6 L26.6,23.6" stroke="#7f7f7f" stroke-width="5.2"/><path d="M20.5,22.8 Q28.5,23.5 27,28.8 Q24.5,35.2 11,35.8 Q16,27 20.5,22.8 Z" fill="#4a7fc1"/><ellipse cx="22.8" cy="27.6" rx="2" ry="3" transform="rotate(40 22.8 27.6)" fill="#fff"/></svg>
<div class="a t" id="f38" style="top:133.00px;font-size:16px;line-height:16px;color:#303030;left:1154px;transform:scaleX(0.8956);transform-origin:left;">Format as</div>
<div class="a t" id="f39" style="top:153.00px;font-size:16px;line-height:16px;color:#303030;left:1162.5px;transform:scaleX(0.8889);transform-origin:left;">Table</div>
<svg class="a" style="left:1203px;top:156.5px;" width="9" height="6" viewBox="0 0 9 6" ><path d="M1,1 L4.5,4.15 L8,1" fill="none" stroke="#444" stroke-width="1.3"/></svg>
<svg class="a" style="left:1232px;top:89px;" width="42" height="41" viewBox="0 0 42 41" ><rect x="1.2" y="1" width="33.6" height="28.5" fill="#fff" stroke="#7a7a7a" stroke-width="1.3"/><rect x="8.4" y="8.3" width="18.2" height="12.7" fill="#c5d7ec"/><path d="M8.4,1 V29.5 M26.6,1 V29.5 M1.2,8.3 H34.8 M1.2,21 H34.8" stroke="#9a9a9a" stroke-width="1.2"/><rect x="1.2" y="1" width="33.6" height="28.5" fill="none" stroke="#7a7a7a" stroke-width="1.3"/><path d="M38.8,12 L30.6,22.2" stroke="#7f7f7f" stroke-width="5.2"/><path d="M29.6,23.6 L27.2,26.6" stroke="#7f7f7f" stroke-width="5.2"/><path d="M24.2,25.8 Q30.8,26.5 29.2,31.6 Q26.6,38.2 12.5,38.8 Q17.5,30 24.2,25.8 Z" fill="#4a7fc1"/><ellipse cx="26.2" cy="30.4" rx="2" ry="3" transform="rotate(40 26.2 30.4)" fill="#fff"/></svg>
<div class="a t" id="f40" style="top:133.00px;font-size:16px;line-height:16px;color:#303030;left:1250px;transform:translateX(-50%) scaleX(0.8889);transform-origin:center;">Cell</div>
<div class="a t" id="f41" style="top:153.00px;font-size:16px;line-height:16px;color:#303030;left:1225px;transform:scaleX(0.8720);transform-origin:left;">Styles</div>
<svg class="a" style="left:1268px;top:156.5px;" width="9" height="6" viewBox="0 0 9 6" ><path d="M1,1 L4.5,4.15 L8,1" fill="none" stroke="#444" stroke-width="1.3"/></svg>
<svg class="a" style="left:1306px;top:90px;" width="38" height="37" viewBox="0 0 38 37" ><g fill="#fff" stroke="#6d6d6d" stroke-width="1.3"><rect x="4.6" y="1.6" width="18" height="5.8"/><rect x="4.6" y="23.8" width="18" height="11.8"/></g><rect x="18.6" y="12.6" width="18" height="5.8" fill="#c5d7ec" stroke="#6d6d6d" stroke-width="1.3"/><path d="M13.6,1.6 V7.4 M27.6,12.6 V18.4 M13.6,23.8 V35.6 M4.6,29.6 H22.6" stroke="#6d6d6d" stroke-width="1.3"/><path d="M1,15.4 L9.8,10 V20.8 Z" fill="#4a7fc1"/><rect x="9" y="13.7" width="6.8" height="3.4" fill="#4a7fc1"/></svg>
<div class="a t" id="f42" style="top:133.00px;font-size:16px;line-height:16px;color:#303030;left:1326px;transform:translateX(-50%) scaleX(0.8996);transform-origin:center;">Insert</div>
<svg class="a" style="left:1321.5px;top:156px;" width="9" height="6" viewBox="0 0 9 6" ><path d="M1,1 L4.5,4.15 L8,1" fill="none" stroke="#444" stroke-width="1.3"/></svg>
<svg class="a" style="left:1361px;top:90px;" width="38" height="37" viewBox="0 0 38 37" ><g fill="#fff" stroke="#6d6d6d" stroke-width="1.3"><rect x="1.6" y="1.6" width="18.4" height="5.8"/><rect x="1.6" y="21.6" width="18.4" height="11.8"/></g><rect x="8.6" y="11.6" width="15" height="5.8" fill="#c5d7ec" stroke="#6d6d6d" stroke-width="1.3"/><path d="M10.6,1.6 V7.4 M17.4,11.6 V17.4 M10.6,21.6 V33.4 M1.6,27.6 H20" stroke="#6d6d6d" stroke-width="1.3"/><path d="M23.6,11.6 L26,14.5 L23.6,17.4 Z" fill="#c5d7ec"/><path d="M19.5,7.8 Q27,12 35.6,22.6 M35.6,8.2 Q26,14 19.5,22.2" fill="none" stroke="#d9542c" stroke-width="3" stroke-linecap="round"/></svg>
<div class="a t" id="f43" style="top:133.00px;font-size:16px;line-height:16px;color:#303030;left:1378px;transform:translateX(-50%) scaleX(0.9297);transform-origin:center;">Delete</div>
<svg class="a" style="left:1373.5px;top:156px;" width="9" height="6" viewBox="0 0 9 6" ><path d="M1,1 L4.5,4.15 L8,1" fill="none" stroke="#444" stroke-width="1.3"/></svg>
<svg class="a" style="left:1412px;top:88px;" width="36" height="40" viewBox="0 0 36 40" ><path d="M1.6,2 V7.8 M28.8,2 V7.8" stroke="#4a7fc1" stroke-width="1.3"/><path d="M4.5,4.9 H26 M7.5,1.8 L4.2,4.9 L7.5,8 M23,1.8 L26.3,4.9 L23,8" fill="none" stroke="#4a7fc1" stroke-width="2.4"/><rect x="1.3" y="10.3" width="33.5" height="24.2" fill="#fff" stroke="#6d6d6d" stroke-width="1.3"/><path d="M9.5,10.3 V34.5 M19.7,10.3 V34.5 M28.7,10.3 V34.5 M1.3,16.6 H34.8 M1.3,28.5 H34.8" stroke="#a6a6a6" stroke-width="1.2"/><rect x="10" y="17" width="9.2" height="11" fill="#4a7fc1"/><path d="M1.3,34.5 V37.2 Q1.3,38.6 2.8,38.6 H10 L12,34.5 M12,34.5 V37.2 Q12,38.6 13.5,38.6 H20.5 L23,34.5" fill="#fff" stroke="#6d6d6d" stroke-width="1.2"/></svg>
<div class="a t" id="f44" style="top:133.00px;font-size:16px;line-height:16px;color:#303030;left:1430.5px;transform:translateX(-50%) scaleX(0.9275);transform-origin:center;">Format</div>
<svg class="a" style="left:1426px;top:156px;" width="9" height="6" viewBox="0 0 9 6" ><path d="M1,1 L4.5,4.15 L8,1" fill="none" stroke="#444" stroke-width="1.3"/></svg>
<svg class="a" style="left:1482px;top:90px;" width="18" height="17" viewBox="0 0 18 17" ><path d="M15.6,4 V1.2 H1.8 L8.6,8.2 L1.8,15.2 H15.6 V12.4" fill="none" stroke="#505050" stroke-width="2"/></svg>
<div class="a t" id="f45" style="top:91.00px;font-size:16px;line-height:16px;color:#303030;left:1505px;transform:scaleX(0.9117);transform-origin:left;">AutoSum</div>
<svg class="a" style="left:1587px;top:96px;" width="9" height="6" viewBox="0 0 9 6" ><path d="M1,1 L4.5,4.15 L8,1" fill="none" stroke="#444" stroke-width="1.3"/></svg>
<svg class="a" style="left:1482px;top:118px;" width="18" height="18" viewBox="0 0 18 18" ><rect x="0.6" y="0.6" width="16" height="16.5" fill="#fff" stroke="#6d6d6d" stroke-width="1.2"/><rect x="0.6" y="0.6" width="16" height="2.6" fill="#6d6d6d"/><path d="M8.6,5 V10.5" stroke="#4a7fc1" stroke-width="2.4"/><path d="M4,9.4 H13.2 L8.6,14.4 Z" fill="#4a7fc1"/></svg>
<div class="a t" id="f46" style="top:120.00px;font-size:16px;line-height:16px;color:#303030;left:1505px;transform:scaleX(0.8807);transform-origin:left;">Fill</div>
<svg class="a" style="left:1529px;top:123.5px;" width="9" height="6" viewBox="0 0 9 6" ><path d="M1,1 L4.5,4.15 L8,1" fill="none" stroke="#444" stroke-width="1.3"/></svg>
<svg class="a" style="left:1482px;top:147px;" width="18" height="18" viewBox="0 0 18 18" ><path d="M1,12 L11,2 Q12,1 13,2 L16,5 Q17,6 16,7 L6,17 Q5,18 4,17 L1,14 Q0,13 1,12 Z" fill="#e8728b"/><path d="M6,7 L11,12" stroke="#f3f3f3" stroke-width="0.8"/></svg>
<div class="a t" id="f47" style="top:149.00px;font-size:16px;line-height:16px;color:#303030;left:1505px;transform:scaleX(0.8762);transform-origin:left;">Clear</div>
<svg class="a" style="left:1544px;top:152.5px;" width="9" height="6" viewBox="0 0 9 6" ><path d="M1,1 L4.5,4.15 L8,1" fill="none" stroke="#444" stroke-width="1.3"/></svg>
<svg class="a" style="left:1613px;top:91px;" width="38" height="34" viewBox="0 0 38 34" ><path d="M2,14.3 L7.7,1.4 L13.4,14.3 M4.2,10 H11.2" fill="none" stroke="#4a7fc1" stroke-width="2.1"/><path d="M2.2,20.5 H12.6 L2.4,31.4 H12.9" fill="none" stroke="#a35fc8" stroke-width="2.1"/><path d="M18.6,8.8 H35.8 L29.2,16.2 V24.4 H25.2 V16.2 Z" fill="#8a8a8a" stroke="#6d6d6d" stroke-width="1"/></svg>
<div class="a t" id="f48" style="top:133.00px;font-size:16px;line-height:16px;color:#303030;left:1632px;transform:translateX(-50%) scaleX(0.9445);transform-origin:center;">Sort &amp;</div>
<div class="a t" id="f49" style="top:153.00px;font-size:16px;line-height:16px;color:#303030;left:1609.5px;transform:scaleX(0.9279);transform-origin:left;">Filter</div>
<svg class="a" style="left:1647.5px;top:156.5px;" width="9" height="6" viewBox="0 0 9 6" ><path d="M1,1 L4.5,4.15 L8,1" fill="none" stroke="#444" stroke-width="1.3"/></svg>
<svg class="a" style="left:1671px;top:90px;" width="36" height="36" viewBox="0 0 36 36" ><circle cx="21" cy="12.5" r="10.5" fill="#fff" stroke="#4a7fc1" stroke-width="2.8"/><path d="M13.5,20 L3,31" stroke="#4a7fc1" stroke-width="4.5" stroke-linecap="round"/></svg>
<div class="a t" id="f50" style="top:133.00px;font-size:16px;line-height:16px;color:#303030;left:1689px;transform:translateX(-50%) scaleX(0.9297);transform-origin:center;">Find &amp;</div>
<div class="a t" id="f51" style="top:153.00px;font-size:16px;line-height:16px;color:#303030;left:1662.5px;transform:scaleX(0.8883);transform-origin:left;">Select</div>
<svg class="a" style="left:1707px;top:156.5px;" width="9" height="6" viewBox="0 0 9 6" ><path d="M1,1 L4.5,4.15 L8,1" fill="none" stroke="#444" stroke-width="1.3"/></svg>
<svg class="a" style="left:1759px;top:99px;" width="15" height="15" viewBox="0 0 15 15" ><circle cx="7.5" cy="7.5" r="6.5" fill="#ff8c00"/></svg>
<div class="a t" id="f52" style="top:133.00px;font-size:16px;line-height:16px;color:#303030;left:1768px;transform:translateX(-50%) scaleX(0.9401);transform-origin:center;">Add-ins</div>
<svg class="a" style="left:1834px;top:92px;" width="36" height="38" viewBox="0 0 36 38" ><path d="M15.5,30 H3.6 Q1.8,30 1.8,28.2 V2.7 Q1.8,0.9 3.6,0.9 H17 Q17.9,0.9 18.8,1.8 L24.6,7.6 Q25.5,8.5 25.5,9.6 V17" fill="none" stroke="#4a7fc1" stroke-width="1.5"/><path d="M5.5,18.5 Q9,14 11,7.5 Q12,4.5 12.8,8 Q13.5,12.5 20,16.5 Q14,16 5.5,18.5 Z" fill="none" stroke="#4a7fc1" stroke-width="1.1"/><g transform="translate(26.5,27) rotate(-45)"><rect x="-3.3" y="-9" width="6.6" height="10" rx="3.3" fill="none" stroke="#4a7fc1" stroke-width="1.7"/><rect x="-3.3" y="-1" width="6.6" height="10" rx="3.3" fill="none" stroke="#4a7fc1" stroke-width="1.7"/></g></svg>
<div class="a t" id="f53" style="top:133.00px;font-size:16px;line-height:16px;color:#303030;left:1846px;transform:translateX(-50%) scaleX(0.8953);transform-origin:center;">Create</div>
<div class="a t" id="f54" style="top:153.00px;font-size:16px;line-height:16px;color:#303030;left:1847px;transform:translateX(-50%) scaleX(0.8270);transform-origin:center;">a PDF</div>
<div class="a" style="left:6px;top:208px;width:127px;height:30px;background:#fff;border:1px solid #c6c6c6;box-sizing:border-box;"></div>
<div class="a t" id="f55" style="top:216.00px;font-size:16px;line-height:16px;color:#262626;left:13.5px;transform:scaleX(0.9290);transform-origin:left;">D3</div>
<svg class="a" style="left:117px;top:221.5px;" width="8" height="4" viewBox="0 0 8 4" ><path d="M0,0 H7 L3.5,3.5 Z" fill="#666"/></svg>
<div class="a" style="left:150px;top:216px;width:3px;height:3px;background:#a6a6a6;"></div>
<div class="a" style="left:150px;top:222px;width:3px;height:3px;background:#a6a6a6;"></div>
<div class="a" style="left:150px;top:228px;width:3px;height:3px;background:#a6a6a6;"></div>
<div class="a" style="left:170px;top:208px;width:137px;height:30px;background:#fff;border:1px solid #c6c6c6;box-sizing:border-box;"></div>
<svg class="a" style="left:185px;top:215px;" width="16" height="16" viewBox="0 0 16 16" ><path d="M1.5,1.5 L14.5,14.5 M14.5,1.5 L1.5,14.5" stroke="#bdbdbd" stroke-width="1.6"/></svg>
<svg class="a" style="left:229px;top:216px;" width="18" height="15" viewBox="0 0 18 15" ><path d="M1.5,8 L6.5,13 L16.5,2" fill="none" stroke="#c6c6c6" stroke-width="2"/></svg>
<svg class="a" style="left:272px;top:211px;" width="22" height="24" viewBox="0 0 22 24" ><g fill="none" stroke="#6a6a6a" stroke-linecap="round"><path d="M3.6,18.6 Q5.6,21.6 7.4,15.5 L10.2,6.5 Q11.8,2.2 14.4,4.6" stroke-width="1.9"/><path d="M5.8,9.7 H12.8" stroke-width="1.5"/><path d="M11.2,12 Q13,11.2 14,14 L15,16.6 Q15.8,18.2 17.6,17.2" stroke-width="1.6"/><path d="M17.8,11.6 L11.4,17.6" stroke-width="1.5"/></g><circle cx="3.4" cy="18.4" r="1.6" fill="#6a6a6a"/><circle cx="14.4" cy="4.9" r="1.4" fill="#6a6a6a"/></svg>
<div class="a" style="left:310px;top:208px;width:1604px;height:30px;background:#fff;border:1px solid #c6c6c6;box-sizing:border-box;"></div>
<svg class="a" style="left:1898px;top:219px;" width="12" height="8" viewBox="0 0 12 8" ><path d="M1,1 L5.5,5.5 L10,1" fill="none" stroke="#777" stroke-width="2"/></svg>
<div class="a" style="left:40px;top:279px;width:1417px;height:682px;background:#ffffff;"></div>
<div class="a" style="left:0px;top:250px;width:1457px;height:28px;background:#e6e6e6;"></div>
<div class="a" style="left:0px;top:278px;width:1457px;height:1px;background:#ababab;"></div>
<div class="a" style="left:0px;top:279px;width:39px;height:682px;background:#e6e6e6;"></div>
<div class="a" style="left:39px;top:250px;width:1px;height:711px;background:#ababab;"></div>
<svg class="a" style="left:15px;top:254px;" width="22" height="22" viewBox="0 0 22 22" ><path d="M21,0 V21 H0 Z" fill="#b4b4b4"/></svg>
<div class="a" style="left:567px;top:250px;width:301px;height:28px;background:#d2d2d2;"></div>
<div class="a" style="left:195px;top:250px;width:1px;height:28px;background:#bdbdbd;"></div>
<div class="a" style="left:327px;top:250px;width:1px;height:28px;background:#bdbdbd;"></div>
<div class="a" style="left:567px;top:250px;width:1px;height:28px;background:#bdbdbd;"></div>
<div class="a" style="left:867px;top:250px;width:1px;height:28px;background:#bdbdbd;"></div>
<div class="a" style="left:1120px;top:250px;width:1px;height:28px;background:#bdbdbd;"></div>
<div class="a" style="left:1248px;top:250px;width:1px;height:28px;background:#bdbdbd;"></div>
<div class="a" style="left:567px;top:277px;width:301px;height:2px;background:#217346;"></div>
<div class="a t" style="top:256.00px;font-size:19.5px;line-height:19.5px;color:#000;left:117.5px;transform:translateX(-50%) ;">A</div>
<div class="a t" style="top:256.00px;font-size:19.5px;line-height:19.5px;color:#000;left:261px;transform:translateX(-50%) ;">B</div>
<div class="a t" style="top:256.00px;font-size:19.5px;line-height:19.5px;color:#000;left:447px;transform:translateX(-50%) ;">C</div>
<div class="a t" style="top:256.00px;font-size:19.5px;line-height:19.5px;color:#217346;left:717.5px;transform:translateX(-50%) ;">D</div>
<div class="a t" style="top:256.00px;font-size:19.5px;line-height:19.5px;color:#000;left:994px;transform:translateX(-50%) ;">E</div>
<div class="a t" style="top:256.00px;font-size:19.5px;line-height:19.5px;color:#000;left:1184px;transform:translateX(-50%) ;">F</div>
<div class="a t" style="top:256.00px;font-size:19.5px;line-height:19.5px;color:#000;left:1374px;transform:translateX(-50%) ;">G</div>
<div class="a" style="left:0px;top:307px;width:39px;height:1px;background:#c6c6c6;"></div>
<div class="a t" style="top:285.00px;font-size:19.5px;line-height:19.5px;color:#000;left:19.5px;transform:translateX(-50%) ;">1</div>
<div class="a" style="left:0px;top:336px;width:39px;height:1px;background:#c6c6c6;"></div>
<div class="a t" style="top:314.00px;font-size:19.5px;line-height:19.5px;color:#000;left:19.5px;transform:translateX(-50%) ;">2</div>
<div class="a" style="left:0px;top:337px;width:39px;height:28px;background:#d2d2d2;"></div>
<div class="a" style="left:38px;top:336px;width:2px;height:30px;background:#217346;"></div>
<div class="a" style="left:0px;top:365px;width:39px;height:1px;background:#c6c6c6;"></div>
<div class="a t" style="top:343.00px;font-size:19.5px;line-height:19.5px;color:#217346;left:19.5px;transform:translateX(-50%) ;">3</div>
<div class="a" style="left:0px;top:394px;width:39px;height:1px;background:#c6c6c6;"></div>
<div class="a t" style="top:372.00px;font-size:19.5px;line-height:19.5px;color:#000;left:19.5px;transform:translateX(-50%) ;">4</div>
<div class="a" style="left:0px;top:423px;width:39px;height:1px;background:#c6c6c6;"></div>
<div class="a t" style="top:401.00px;font-size:19.5px;line-height:19.5px;color:#000;left:19.5px;transform:translateX(-50%) ;">5</div>
<div class="a" style="left:0px;top:452px;width:39px;height:1px;background:#c6c6c6;"></div>
<div class="a t" style="top:430.00px;font-size:19.5px;line-height:19.5px;color:#000;left:19.5px;transform:translateX(-50%) ;">6</div>
<div class="a" style="left:0px;top:481px;width:39px;height:1px;background:#c6c6c6;"></div>
<div class="a t" style="top:459.00px;font-size:19.5px;line-height:19.5px;color:#000;left:19.5px;transform:translateX(-50%) ;">7</div>
<div class="a" style="left:0px;top:510px;width:39px;height:1px;background:#c6c6c6;"></div>
<div class="a t" style="top:488.00px;font-size:19.5px;line-height:19.5px;color:#000;left:19.5px;transform:translateX(-50%) ;">8</div>
<div class="a" style="left:0px;top:539px;width:39px;height:1px;background:#c6c6c6;"></div>
<div class="a t" style="top:517.00px;font-size:19.5px;line-height:19.5px;color:#000;left:19.5px;transform:translateX(-50%) ;">9</div>
<div class="a" style="left:0px;top:568px;width:39px;height:1px;background:#c6c6c6;"></div>
<div class="a t" style="top:546.00px;font-size:19.5px;line-height:19.5px;color:#000;left:19.5px;transform:translateX(-50%) ;">10</div>
<div class="a" style="left:0px;top:597px;width:39px;height:1px;background:#c6c6c6;"></div>
<div class="a t" style="top:575.00px;font-size:19.5px;line-height:19.5px;color:#000;left:19.5px;transform:translateX(-50%) ;">11</div>
<div class="a" style="left:0px;top:626px;width:39px;height:1px;background:#c6c6c6;"></div>
<div class="a t" style="top:604.00px;font-size:19.5px;line-height:19.5px;color:#000;left:19.5px;transform:translateX(-50%) ;">12</div>
<div class="a" style="left:0px;top:655px;width:39px;height:1px;background:#c6c6c6;"></div>
<div class="a t" style="top:633.00px;font-size:19.5px;line-height:19.5px;color:#000;left:19.5px;transform:translateX(-50%) ;">13</div>
<div class="a" style="left:0px;top:684px;width:39px;height:1px;background:#c6c6c6;"></div>
<div class="a t" style="top:662.00px;font-size:19.5px;line-height:19.5px;color:#000;left:19.5px;transform:translateX(-50%) ;">14</div>
<div class="a" style="left:0px;top:713px;width:39px;height:1px;background:#c6c6c6;"></div>
<div class="a t" style="top:691.00px;font-size:19.5px;line-height:19.5px;color:#000;left:19.5px;transform:translateX(-50%) ;">15</div>
<div class="a" style="left:0px;top:742px;width:39px;height:1px;background:#c6c6c6;"></div>
<div class="a t" style="top:720.00px;font-size:19.5px;line-height:19.5px;color:#000;left:19.5px;transform:translateX(-50%) ;">16</div>
<div class="a" style="left:0px;top:771px;width:39px;height:1px;background:#c6c6c6;"></div>
<div class="a t" style="top:749.00px;font-size:19.5px;line-height:19.5px;color:#000;left:19.5px;transform:translateX(-50%) ;">17</div>
<div class="a" style="left:0px;top:800px;width:39px;height:1px;background:#c6c6c6;"></div>
<div class="a t" style="top:778.00px;font-size:19.5px;line-height:19.5px;color:#000;left:19.5px;transform:translateX(-50%) ;">18</div>
<div class="a" style="left:0px;top:829px;width:39px;height:1px;background:#c6c6c6;"></div>
<div class="a t" style="top:807.00px;font-size:19.5px;line-height:19.5px;color:#000;left:19.5px;transform:translateX(-50%) ;">19</div>
<div class="a" style="left:0px;top:858px;width:39px;height:1px;background:#c6c6c6;"></div>
<div class="a t" style="top:836.00px;font-size:19.5px;line-height:19.5px;color:#000;left:19.5px;transform:translateX(-50%) ;">20</div>
<div class="a" style="left:0px;top:887px;width:39px;height:1px;background:#c6c6c6;"></div>
<div class="a t" style="top:865.00px;font-size:19.5px;line-height:19.5px;color:#000;left:19.5px;transform:translateX(-50%) ;">21</div>
<div class="a" style="left:0px;top:916px;width:39px;height:1px;background:#c6c6c6;"></div>
<div class="a t" style="top:894.00px;font-size:19.5px;line-height:19.5px;color:#000;left:19.5px;transform:translateX(-50%) ;">22</div>
<div class="a" style="left:0px;top:945px;width:39px;height:1px;background:#c6c6c6;"></div>
<div class="a t" style="top:923.00px;font-size:19.5px;line-height:19.5px;color:#000;left:19.5px;transform:translateX(-50%) ;">23</div>
<div class="a" style="left:0px;top:974px;width:39px;height:1px;background:#c6c6c6;"></div>
<div class="a t" style="top:952.00px;font-size:19.5px;line-height:19.5px;color:#000;left:19.5px;transform:translateX(-50%) ;">24</div>
<div class="a" style="left:0;top:0;width:1920px;height:961px;overflow:hidden;">
<div class="a" style="left:40px;top:279px;width:828px;height:28px;background:#365f91;"></div>
<div class="a" style="left:40px;top:307px;width:828px;height:1px;background:#b8cce4;"></div>
<div class="a t" id="f56" style="top:285.00px;font-size:19.5px;line-height:19.5px;color:#fff;left:44px;transform:scaleX(0.9814);transform-origin:left;">Row Labels</div>
<svg class="a" style="left:174px;top:285px;" width="22" height="21" viewBox="0 0 22 21" ><defs><linearGradient id="fb" x1="0" y1="0" x2="0" y2="1"><stop offset="0" stop-color="#ffffff"/><stop offset="1" stop-color="#e4e4e4"/></linearGradient></defs><rect x="0.5" y="0.5" width="20" height="20" fill="url(#fb)" stroke="#c8c8c8"/><path d="M6.5,9 H14.5 L10.5,13 Z" fill="#595959"/></svg>
<div class="a t" id="f57" style="top:285.00px;font-size:19.5px;line-height:19.5px;color:#fff;left:199.5px;transform:scaleX(0.9341);transform-origin:left;">Sum of SALES</div>
<div class="a t" id="f58" style="top:285.00px;font-size:19.5px;line-height:19.5px;color:#fff;left:332px;transform:scaleX(1.0732);transform-origin:left;">% Diff. from Prev. Month</div>
<div class="a t" id="f59" style="top:285.00px;font-size:19.5px;line-height:19.5px;color:#fff;left:571px;transform:scaleX(1.0494);transform-origin:left;">%Diff. from Prev. Financial Year</div>
<div class="a" style="left:40px;top:308px;width:828px;height:28px;background:#95b3d7;"></div>
<svg class="a" style="left:47px;top:317px;" width="13" height="13" viewBox="0 0 13 13" ><defs><linearGradient id="cb2" x1="0" y1="0" x2="0" y2="1"><stop offset="0" stop-color="#f4f4f4"/><stop offset="1" stop-color="#d6d6d6"/></linearGradient></defs><rect x="0.5" y="0.5" width="12" height="12" rx="2" fill="url(#cb2)" stroke="#b0b0b0"/><rect x="2.5" y="6" width="8" height="1" fill="#1f3f6e"/></svg>
<div class="a t" id="f60" style="top:314.00px;font-size:19.5px;line-height:19.5px;color:#fff;left:63.5px;transform:scaleX(0.9910);transform-origin:left;">2012</div>
<div class="a t" style="top:314.00px;font-size:19.5px;line-height:19.5px;color:#fff;right:1595.5px;">1,04,45,697</div>
<div class="a" style="left:40px;top:365px;width:828px;height:1px;background:#dce6f1;"></div>
<div class="a t" id="f61" style="top:343.00px;font-size:19.5px;line-height:19.5px;color:#000;left:87.4px;transform:scaleX(1.0162);transform-origin:left;">January</div>
<div class="a t" style="top:343.00px;font-size:19.5px;line-height:19.5px;color:#000;right:1595.5px;">8,16,467</div>
<div class="a" style="left:40px;top:394px;width:828px;height:1px;background:#dce6f1;"></div>
<div class="a t" id="f62" style="top:372.00px;font-size:19.5px;line-height:19.5px;color:#000;left:87.4px;transform:scaleX(1.0380);transform-origin:left;">February</div>
<div class="a t" style="top:372.00px;font-size:19.5px;line-height:19.5px;color:#000;right:1595.5px;">9,16,220</div>
<div class="a t" style="top:372.00px;font-size:19.5px;line-height:19.5px;color:#000;right:1355.5px;transform:scaleX(0.95);transform-origin:right;">12%</div>
<div class="a" style="left:40px;top:423px;width:828px;height:1px;background:#dce6f1;"></div>
<div class="a t" id="f63" style="top:401.00px;font-size:19.5px;line-height:19.5px;color:#000;left:87.4px;transform:scaleX(1.0519);transform-origin:left;">March</div>
<div class="a t" style="top:401.00px;font-size:19.5px;line-height:19.5px;color:#000;right:1595.5px;">7,84,136</div>
<div class="a t" style="top:401.00px;font-size:19.5px;line-height:19.5px;color:#ff0000;right:1355.5px;transform:scaleX(0.95);transform-origin:right;">-14%</div>
<div class="a" style="left:40px;top:452px;width:828px;height:1px;background:#dce6f1;"></div>
<div class="a t" id="f64" style="top:430.00px;font-size:19.5px;line-height:19.5px;color:#000;left:87.4px;transform:scaleX(1.0893);transform-origin:left;">April</div>
<div class="a t" style="top:430.00px;font-size:19.5px;line-height:19.5px;color:#000;right:1595.5px;">8,99,999</div>
<div class="a t" style="top:430.00px;font-size:19.5px;line-height:19.5px;color:#000;right:1355.5px;transform:scaleX(0.95);transform-origin:right;">15%</div>
<div class="a" style="left:40px;top:481px;width:828px;height:1px;background:#dce6f1;"></div>
<div class="a t" id="f65" style="top:459.00px;font-size:19.5px;line-height:19.5px;color:#000;left:87.4px;transform:scaleX(1.0517);transform-origin:left;">May</div>
<div class="a t" style="top:459.00px;font-size:19.5px;line-height:19.5px;color:#000;right:1595.5px;">8,64,876</div>
<div class="a t" style="top:459.00px;font-size:19.5px;line-height:19.5px;color:#ff0000;right:1355.5px;transform:scaleX(0.95);transform-origin:right;">-4%</div>
<div class="a" style="left:40px;top:510px;width:828px;height:1px;background:#dce6f1;"></div>
<div class="a t" id="f66" style="top:488.00px;font-size:19.5px;line-height:19.5px;color:#000;left:87.4px;transform:scaleX(0.9693);transform-origin:left;">June</div>
<div class="a t" style="top:488.00px;font-size:19.5px;line-height:19.5px;color:#000;right:1595.5px;">7,86,918</div>
<div class="a t" style="top:488.00px;font-size:19.5px;line-height:19.5px;color:#ff0000;right:1355.5px;transform:scaleX(0.95);transform-origin:right;">-9%</div>
<div class="a" style="left:40px;top:539px;width:828px;height:1px;background:#dce6f1;"></div>
<div class="a t" id="f67" style="top:517.00px;font-size:19.5px;line-height:19.5px;color:#000;left:87.4px;transform:scaleX(0.9658);transform-origin:left;">July</div>
<div class="a t" style="top:517.00px;font-size:19.5px;line-height:19.5px;color:#000;right:1595.5px;">10,56,573</div>
<div class="a t" style="top:517.00px;font-size:19.5px;line-height:19.5px;color:#000;right:1355.5px;transform:scaleX(0.95);transform-origin:right;">34%</div>
<div class="a" style="left:40px;top:568px;width:828px;height:1px;background:#dce6f1;"></div>
<div class="a t" id="f68" style="top:546.00px;font-size:19.5px;line-height:19.5px;color:#000;left:87.4px;transform:scaleX(1.0293);transform-origin:left;">August</div>
<div class="a t" style="top:546.00px;font-size:19.5px;line-height:19.5px;color:#000;right:1595.5px;">8,06,719</div>
<div class="a t" style="top:546.00px;font-size:19.5px;line-height:19.5px;color:#ff0000;right:1355.5px;transform:scaleX(0.95);transform-origin:right;">-24%</div>
<div class="a" style="left:40px;top:597px;width:828px;height:1px;background:#dce6f1;"></div>
<div class="a t" id="f69" style="top:575.00px;font-size:19.5px;line-height:19.5px;color:#000;left:87.4px;transform:scaleX(1.0357);transform-origin:left;">September</div>
<div class="a t" style="top:575.00px;font-size:19.5px;line-height:19.5px;color:#000;right:1595.5px;">8,63,089</div>
<div class="a t" style="top:575.00px;font-size:19.5px;line-height:19.5px;color:#000;right:1355.5px;transform:scaleX(0.95);transform-origin:right;">7%</div>
<div class="a" style="left:40px;top:626px;width:828px;height:1px;background:#dce6f1;"></div>
<div class="a t" id="f70" style="top:604.00px;font-size:19.5px;line-height:19.5px;color:#000;left:87.4px;transform:scaleX(1.0479);transform-origin:left;">October</div>
<div class="a t" style="top:604.00px;font-size:19.5px;line-height:19.5px;color:#000;right:1595.5px;">8,73,208</div>
<div class="a t" style="top:604.00px;font-size:19.5px;line-height:19.5px;color:#000;right:1355.5px;transform:scaleX(0.95);transform-origin:right;">1%</div>
<div class="a" style="left:40px;top:655px;width:828px;height:1px;background:#dce6f1;"></div>
<div class="a t" id="f71" style="top:633.00px;font-size:19.5px;line-height:19.5px;color:#000;left:87.4px;transform:scaleX(1.0539);transform-origin:left;">November</div>
<div class="a t" style="top:633.00px;font-size:19.5px;line-height:19.5px;color:#000;right:1595.5px;">9,23,402</div>
<div class="a t" style="top:633.00px;font-size:19.5px;line-height:19.5px;color:#000;right:1355.5px;transform:scaleX(0.95);transform-origin:right;">6%</div>
<div class="a" style="left:40px;top:684px;width:828px;height:1px;background:#dce6f1;"></div>
<div class="a t" id="f72" style="top:662.00px;font-size:19.5px;line-height:19.5px;color:#000;left:87.4px;transform:scaleX(1.0294);transform-origin:left;">December</div>
<div class="a t" style="top:662.00px;font-size:19.5px;line-height:19.5px;color:#000;right:1595.5px;">8,54,090</div>
<div class="a t" style="top:662.00px;font-size:19.5px;line-height:19.5px;color:#ff0000;right:1355.5px;transform:scaleX(0.95);transform-origin:right;">-8%</div>
<div class="a" style="left:40px;top:685px;width:828px;height:28px;background:#95b3d7;"></div>
<svg class="a" style="left:47px;top:694px;" width="13" height="13" viewBox="0 0 13 13" ><defs><linearGradient id="cb15" x1="0" y1="0" x2="0" y2="1"><stop offset="0" stop-color="#f4f4f4"/><stop offset="1" stop-color="#d6d6d6"/></linearGradient></defs><rect x="0.5" y="0.5" width="12" height="12" rx="2" fill="url(#cb15)" stroke="#b0b0b0"/><rect x="2.5" y="6" width="8" height="1" fill="#1f3f6e"/></svg>
<div class="a t" id="f73" style="top:691.00px;font-size:19.5px;line-height:19.5px;color:#fff;left:63.5px;transform:scaleX(0.9910);transform-origin:left;">2013</div>
<div class="a t" style="top:691.00px;font-size:19.5px;line-height:19.5px;color:#fff;right:1595.5px;">1,10,52,607</div>
<div class="a t" style="top:691.00px;font-size:19.5px;line-height:19.5px;color:#000;right:1056.5px;transform:scaleX(0.95);transform-origin:right;">6%</div>
<div class="a" style="left:40px;top:742px;width:828px;height:1px;background:#dce6f1;"></div>
<div class="a t" id="f74" style="top:720.00px;font-size:19.5px;line-height:19.5px;color:#000;left:87.4px;transform:scaleX(1.0162);transform-origin:left;">January</div>
<div class="a t" style="top:720.00px;font-size:19.5px;line-height:19.5px;color:#000;right:1595.5px;">8,72,080</div>
<div class="a t" style="top:720.00px;font-size:19.5px;line-height:19.5px;color:#000;right:1056.5px;transform:scaleX(0.95);transform-origin:right;">7%</div>
<div class="a" style="left:40px;top:771px;width:828px;height:1px;background:#dce6f1;"></div>
<div class="a t" id="f75" style="top:749.00px;font-size:19.5px;line-height:19.5px;color:#000;left:87.4px;transform:scaleX(1.0380);transform-origin:left;">February</div>
<div class="a t" style="top:749.00px;font-size:19.5px;line-height:19.5px;color:#000;right:1595.5px;">9,03,456</div>
<div class="a t" style="top:749.00px;font-size:19.5px;line-height:19.5px;color:#000;right:1355.5px;transform:scaleX(0.95);transform-origin:right;">4%</div>
<div class="a t" style="top:749.00px;font-size:19.5px;line-height:19.5px;color:#ff0000;right:1056.5px;transform:scaleX(0.95);transform-origin:right;">-1%</div>
<div class="a" style="left:40px;top:800px;width:828px;height:1px;background:#dce6f1;"></div>
<div class="a t" id="f76" style="top:778.00px;font-size:19.5px;line-height:19.5px;color:#000;left:87.4px;transform:scaleX(1.0519);transform-origin:left;">March</div>
<div class="a t" style="top:778.00px;font-size:19.5px;line-height:19.5px;color:#000;right:1595.5px;">10,72,277</div>
<div class="a t" style="top:778.00px;font-size:19.5px;line-height:19.5px;color:#000;right:1355.5px;transform:scaleX(0.95);transform-origin:right;">19%</div>
<div class="a t" style="top:778.00px;font-size:19.5px;line-height:19.5px;color:#000;right:1056.5px;transform:scaleX(0.95);transform-origin:right;">37%</div>
<div class="a" style="left:40px;top:829px;width:828px;height:1px;background:#dce6f1;"></div>
<div class="a t" id="f77" style="top:807.00px;font-size:19.5px;line-height:19.5px;color:#000;left:87.4px;transform:scaleX(1.0893);transform-origin:left;">April</div>
<div class="a t" style="top:807.00px;font-size:19.5px;line-height:19.5px;color:#000;right:1595.5px;">9,68,855</div>
<div class="a t" style="top:807.00px;font-size:19.5px;line-height:19.5px;color:#ff0000;right:1355.5px;transform:scaleX(0.95);transform-origin:right;">-10%</div>
<div class="a t" style="top:807.00px;font-size:19.5px;line-height:19.5px;color:#000;right:1056.5px;transform:scaleX(0.95);transform-origin:right;">8%</div>
<div class="a" style="left:40px;top:858px;width:828px;height:1px;background:#dce6f1;"></div>
<div class="a t" id="f78" style="top:836.00px;font-size:19.5px;line-height:19.5px;color:#000;left:87.4px;transform:scaleX(1.0517);transform-origin:left;">May</div>
<div class="a t" style="top:836.00px;font-size:19.5px;line-height:19.5px;color:#000;right:1595.5px;">8,50,502</div>
<div class="a t" style="top:836.00px;font-size:19.5px;line-height:19.5px;color:#ff0000;right:1355.5px;transform:scaleX(0.95);transform-origin:right;">-12%</div>
<div class="a t" style="top:836.00px;font-size:19.5px;line-height:19.5px;color:#ff0000;right:1056.5px;transform:scaleX(0.95);transform-origin:right;">-2%</div>
<div class="a" style="left:40px;top:887px;width:828px;height:1px;background:#dce6f1;"></div>
<div class="a t" id="f79" style="top:865.00px;font-size:19.5px;line-height:19.5px;color:#000;left:87.4px;transform:scaleX(0.9693);transform-origin:left;">June</div>
<div class="a t" style="top:865.00px;font-size:19.5px;line-height:19.5px;color:#000;right:1595.5px;">9,81,050</div>
<div class="a t" style="top:865.00px;font-size:19.5px;line-height:19.5px;color:#000;right:1355.5px;transform:scaleX(0.95);transform-origin:right;">15%</div>
<div class="a t" style="top:865.00px;font-size:19.5px;line-height:19.5px;color:#000;right:1056.5px;transform:scaleX(0.95);transform-origin:right;">25%</div>
<div class="a" style="left:40px;top:916px;width:828px;height:1px;background:#dce6f1;"></div>
<div class="a t" id="f80" style="top:894.00px;font-size:19.5px;line-height:19.5px;color:#000;left:87.4px;transform:scaleX(0.9658);transform-origin:left;">July</div>
<div class="a t" style="top:894.00px;font-size:19.5px;line-height:19.5px;color:#000;right:1595.5px;">8,54,835</div>
<div class="a t" style="top:894.00px;font-size:19.5px;line-height:19.5px;color:#ff0000;right:1355.5px;transform:scaleX(0.95);transform-origin:right;">-13%</div>
<div class="a t" style="top:894.00px;font-size:19.5px;line-height:19.5px;color:#ff0000;right:1056.5px;transform:scaleX(0.95);transform-origin:right;">-19%</div>
<div class="a" style="left:40px;top:945px;width:828px;height:1px;background:#dce6f1;"></div>
<div class="a t" id="f81" style="top:923.00px;font-size:19.5px;line-height:19.5px;color:#000;left:87.4px;transform:scaleX(1.0293);transform-origin:left;">August</div>
<div class="a t" style="top:923.00px;font-size:19.5px;line-height:19.5px;color:#000;right:1595.5px;">10,02,597</div>
<div class="a t" style="top:923.00px;font-size:19.5px;line-height:19.5px;color:#000;right:1355.5px;transform:scaleX(0.95);transform-origin:right;">17%</div>
<div class="a t" style="top:923.00px;font-size:19.5px;line-height:19.5px;color:#000;right:1056.5px;transform:scaleX(0.95);transform-origin:right;">24%</div>
<div class="a" style="left:40px;top:974px;width:828px;height:1px;background:#dce6f1;"></div>
<div class="a t" id="f82" style="top:952.00px;font-size:19.5px;line-height:19.5px;color:#000;left:87.4px;transform:scaleX(1.0357);transform-origin:left;">September</div>
<div class="a t" style="top:952.00px;font-size:19.5px;line-height:19.5px;color:#000;right:1595.5px;">8,14,513</div>
<div class="a t" style="top:952.00px;font-size:19.5px;line-height:19.5px;color:#ff0000;right:1355.5px;transform:scaleX(0.95);transform-origin:right;">-19%</div>
<div class="a t" style="top:952.00px;font-size:19.5px;line-height:19.5px;color:#ff0000;right:1056.5px;transform:scaleX(0.95);transform-origin:right;">-6%</div>
<div class="a" style="left:566px;top:335px;width:303px;height:32px;border:2px solid #217346;box-sizing:border-box;"></div>
<div class="a" style="left:865px;top:363px;width:6px;height:6px;background:#217346;outline:1px solid #fff;"></div>
<div class="a" style="left:68px;top:364px;width:284px;height:39px;border:5px solid #e41b1b;box-sizing:border-box;"></div>
<div class="a" style="left:69px;top:743px;width:287px;height:34px;border:5px solid #e41b1b;box-sizing:border-box;"></div>
<div class="a" style="left:804px;top:741px;width:85px;height:35px;border:5px solid #e41b1b;box-sizing:border-box;"></div>
</div>
<div class="a" style="left:0px;top:961px;width:1457px;height:1px;background:#a6a6a6;"></div>
<div class="a" style="left:1456px;top:278px;width:1px;height:684px;background:#a6a6a6;"></div>
<div class="a" style="left:1457px;top:250px;width:26px;height:712px;background:#e6e6e6;"></div>
<div class="a" style="left:1460px;top:271px;width:19px;height:672px;background:#f0f0f0;"></div>
<div class="a" style="left:1460px;top:252px;width:19px;height:19px;background:#fff;border:1px solid #a6a6a6;box-sizing:border-box;"></div>
<svg class="a" style="left:1465px;top:258px;" width="9" height="5" viewBox="0 0 9 5" ><path d="M0,5 L4.5,0 L9,5 Z" fill="#262626"/></svg>
<div class="a" style="left:1460px;top:271px;width:19px;height:63px;background:#fff;border:1px solid #a6a6a6;box-sizing:border-box;"></div>
<div class="a" style="left:1460px;top:943px;width:19px;height:19px;background:#fff;border:1px solid #a6a6a6;box-sizing:border-box;"></div>
<svg class="a" style="left:1465px;top:950px;" width="9" height="5" viewBox="0 0 9 5" ><path d="M0,0 L4.5,5 L9,0 Z" fill="#262626"/></svg>
<div class="a" style="left:0px;top:962px;width:1483px;height:31px;background:#e6e6e6;"></div>
<div class="a" style="left:0px;top:993px;width:1920px;height:1px;background:#cfcfcf;"></div>
<svg class="a" style="left:30px;top:972px;" width="6" height="10" viewBox="0 0 6 10" ><path d="M5.5,0 V10 L0,5 Z" fill="#bdbdbd"/></svg>
<svg class="a" style="left:62px;top:972px;" width="6" height="10" viewBox="0 0 6 10" ><path d="M0,0 V10 L5.5,5 Z" fill="#bdbdbd"/></svg>
<div class="a" style="left:112px;top:961px;width:115px;height:28px;background:#fff;border-left:1px solid #a6a6a6;border-right:1px solid #a6a6a6;box-sizing:border-box;"></div>
<div class="a" style="left:113px;top:987px;width:113px;height:3px;background:#217346;"></div>
<div class="a t" id="f83" style="top:968.00px;font-size:16px;line-height:16px;color:#217346;font-weight:700;left:125px;transform:scaleX(1.0574);transform-origin:left;">Pivot Table</div>
<div class="a t" id="f84" style="top:968.00px;font-size:16px;line-height:16px;color:#444;left:242.5px;transform:scaleX(1.0541);transform-origin:left;">Pivot Table (2)</div>
<div class="a" style="left:367px;top:968px;width:1px;height:22px;background:#a6a6a6;"></div>
<div class="a t" id="f85" style="top:968.00px;font-size:16px;line-height:16px;color:#444;left:381px;transform:scaleX(1.0401);transform-origin:left;">Source Data</div>
<div class="a" style="left:487px;top:968px;width:1px;height:22px;background:#a6a6a6;"></div>
<svg class="a" style="left:525px;top:967px;" width="22" height="22" viewBox="0 0 22 22" ><circle cx="11" cy="11" r="9.5" fill="none" stroke="#666" stroke-width="1.3"/><path d="M11,6 V16 M6,11 H16" stroke="#666" stroke-width="1.4"/></svg>
<div class="a" style="left:888px;top:971px;width:3px;height:3px;background:#bdbdbd;"></div>
<div class="a" style="left:888px;top:976px;width:3px;height:3px;background:#bdbdbd;"></div>
<div class="a" style="left:888px;top:981px;width:3px;height:3px;background:#bdbdbd;"></div>
<div class="a" style="left:908px;top:968px;width:549px;height:19px;background:#f0f0f0;"></div>
<div class="a" style="left:908px;top:968px;width:19px;height:19px;background:#fff;border:1px solid #a6a6a6;box-sizing:border-box;"></div>
<svg class="a" style="left:914px;top:973px;" width="5" height="9" viewBox="0 0 5 9" ><path d="M5,0 V9 L0,4.5 Z" fill="#262626"/></svg>
<div class="a" style="left:926px;top:968px;width:448px;height:19px;background:#fff;border:1px solid #a6a6a6;box-sizing:border-box;"></div>
<div class="a" style="left:1438px;top:968px;width:19px;height:19px;background:#fff;border:1px solid #a6a6a6;box-sizing:border-box;"></div>
<svg class="a" style="left:1445px;top:973px;" width="5" height="9" viewBox="0 0 5 9" ><path d="M0,0 V9 L5,4.5 Z" fill="#262626"/></svg>
<div class="a" style="left:0px;top:994px;width:1920px;height:26px;background:#f3f3f3;"></div>
<div class="a t" id="f86" style="top:1000.00px;font-size:14px;line-height:14px;color:#444;left:14.5px;transform:scaleX(0.8772);transform-origin:left;">Ready</div>
<div class="a" style="left:1483px;top:250px;width:437px;height:743px;background:#e6e6e6;"></div>
<div class="a" style="left:1482px;top:252px;width:1px;height:738px;background:#c6c6c6;"></div>
<div class="a t" id="f87" style="top:267.00px;font-size:27px;line-height:27px;color:#3a3a3a;left:1498px;transform:scaleX(0.9407);transform-origin:left;">PivotTable Fields</div>
<svg class="a" style="left:1830px;top:271px;" width="21" height="12" viewBox="0 0 21 12" ><path d="M1,1 L10.5,10.5 L20,1" fill="none" stroke="#444" stroke-width="1.4"/></svg>
<svg class="a" style="left:1885px;top:270px;" width="14" height="14" viewBox="0 0 14 14" ><path d="M1,1 L13,13 M13,1 L1,13" stroke="#444" stroke-width="1.5"/></svg>
<div class="a t" id="f88" style="top:316.00px;font-size:16px;line-height:16px;color:#303030;left:1499px;transform:scaleX(0.9470);transform-origin:left;">Choose fields to add to report:</div>
<div class="a" style="left:1849px;top:306px;width:56px;height:35px;background:#fff;border:1px solid #c6c6c6;box-sizing:border-box;"></div>
<svg class="a" style="left:1861px;top:313px;" width="20" height="20" viewBox="0 0 20 20" ><g transform="translate(10,10) scale(0.88)"><circle r="5.5" fill="none" stroke="#8a8a8a" stroke-width="4"/><rect x="-1.8" y="-9" width="3.6" height="4" fill="#8a8a8a" transform="rotate(0)"/><rect x="-1.8" y="-9" width="3.6" height="4" fill="#8a8a8a" transform="rotate(45)"/><rect x="-1.8" y="-9" width="3.6" height="4" fill="#8a8a8a" transform="rotate(90)"/><rect x="-1.8" y="-9" width="3.6" height="4" fill="#8a8a8a" transform="rotate(135)"/><rect x="-1.8" y="-9" width="3.6" height="4" fill="#8a8a8a" transform="rotate(180)"/><rect x="-1.8" y="-9" width="3.6" height="4" fill="#8a8a8a" transform="rotate(225)"/><rect x="-1.8" y="-9" width="3.6" height="4" fill="#8a8a8a" transform="rotate(270)"/><rect x="-1.8" y="-9" width="3.6" height="4" fill="#8a8a8a" transform="rotate(315)"/></g></svg>
<svg class="a" style="left:1889px;top:320px;" width="10" height="5" viewBox="0 0 10 5" ><path d="M0,0 H10 L5.0,5 Z" fill="#262626"/></svg>
<div class="a" style="left:1498px;top:357px;width:407px;height:30px;background:#fff;border:1px solid #c6c6c6;box-sizing:border-box;"></div>
<div class="a t" id="f89" style="top:363.00px;font-size:16px;line-height:16px;color:#6f6f6f;left:1506px;transform:scaleX(0.8678);transform-origin:left;">Search</div>
<svg class="a" style="left:1879px;top:361px;" width="22" height="22" viewBox="0 0 22 22" ><circle cx="13" cy="8.5" r="6.5" fill="none" stroke="#444" stroke-width="1.4"/><path d="M8.3,13.2 L1.5,20" stroke="#444" stroke-width="1.5"/></svg>
<div class="a" style="left:1498px;top:407px;width:407px;height:214px;background:#fff;border:1px solid #ababab;box-sizing:border-box;"></div>
<div class="a" style="left:1499px;top:408px;width:405px;height:212px;overflow:hidden;">
<div class="a" style="left:-1499px;top:-408px;width:1920px;height:1020px;">
<div class="a" style="left:1503px;top:411px;width:16px;height:16px;background:#fff;border:1px solid #5f5f5f;box-sizing:border-box;"></div>
<div class="a t" id="f90" style="top:415.00px;font-size:16px;line-height:16px;color:#303030;left:1526px;transform:scaleX(0.8273);transform-origin:left;">CUSTOMER</div>
<div class="a" style="left:1503px;top:438px;width:16px;height:16px;background:#fff;border:1px solid #5f5f5f;box-sizing:border-box;"></div>
<div class="a t" id="f91" style="top:442.00px;font-size:16px;line-height:16px;color:#303030;left:1526px;transform:scaleX(0.8187);transform-origin:left;">PRODUCTS</div>
<div class="a" style="left:1503px;top:465px;width:16px;height:16px;background:#fff;border:1px solid #5f5f5f;box-sizing:border-box;"></div>
<div class="a t" id="f92" style="top:469.00px;font-size:16px;line-height:16px;color:#303030;left:1526px;transform:scaleX(0.8183);transform-origin:left;">SALES REGION</div>
<div class="a" style="left:1503px;top:492px;width:16px;height:16px;background:#fff;border:1px solid #5f5f5f;box-sizing:border-box;"></div>
<div class="a t" id="f93" style="top:496.00px;font-size:16px;line-height:16px;color:#303030;left:1526px;transform:scaleX(0.8331);transform-origin:left;">UNIQUE PURCHASES</div>
<div class="a" style="left:1503px;top:519px;width:16px;height:16px;background:#fff;border:1px solid #5f5f5f;box-sizing:border-box;"></div>
<div class="a t" id="f94" style="top:523.00px;font-size:16px;line-height:16px;color:#303030;left:1526px;transform:scaleX(0.8009);transform-origin:left;">SALES PERSON</div>
<div class="a" style="left:1503px;top:546px;width:16px;height:16px;background:#fff;border:1px solid #5f5f5f;box-sizing:border-box;"></div>
<div class="a t" id="f95" style="top:550.00px;font-size:16px;line-height:16px;color:#303030;left:1526px;transform:scaleX(0.8533);transform-origin:left;">ORDER DATE</div>
<svg class="a" style="left:1503px;top:573px;" width="16" height="16" viewBox="0 0 16 16" ><rect x="0" y="0" width="16" height="16" fill="#217346"/><path d="M3.5,8 L6.5,11 L12.5,5" fill="none" stroke="#fff" stroke-width="1.5"/></svg>
<div class="a t" id="f96" style="top:577.00px;font-size:16px;line-height:16px;color:#1a1a1a;font-weight:700;left:1526px;transform:scaleX(0.8005);transform-origin:left;">SALES</div>
<svg class="a" style="left:1503px;top:600px;" width="16" height="16" viewBox="0 0 16 16" ><rect x="0" y="0" width="16" height="16" fill="#217346"/><path d="M3.5,8 L6.5,11 L12.5,5" fill="none" stroke="#fff" stroke-width="1.5"/></svg>
<div class="a t" id="f97" style="top:604.00px;font-size:16px;line-height:16px;color:#1a1a1a;font-weight:700;left:1526px;transform:scaleX(0.9128);transform-origin:left;">FINANCIAL YEAR</div>
</div></div>
<div class="a" style="left:1884px;top:410px;width:19px;height:209px;background:#f0f0f0;"></div>
<div class="a" style="left:1884px;top:410px;width:19px;height:19px;background:#fff;border:1px solid #ababab;box-sizing:border-box;"></div>
<svg class="a" style="left:1889px;top:416px;" width="9" height="5" viewBox="0 0 9 5" ><path d="M0,5 L4.5,0 L9,5 Z" fill="#262626"/></svg>
<div class="a" style="left:1884px;top:429px;width:19px;height:102px;background:#fff;border:1px solid #ababab;box-sizing:border-box;"></div>
<div class="a" style="left:1884px;top:600px;width:19px;height:19px;background:#fff;border:1px solid #ababab;box-sizing:border-box;"></div>
<svg class="a" style="left:1889px;top:607px;" width="9" height="5" viewBox="0 0 9 5" ><path d="M0,0 L4.5,5 L9,0 Z" fill="#262626"/></svg>
<div class="a" style="left:1500px;top:641px;width:410px;height:0;border-top:1px dotted #bdbdbd;"></div>
<div class="a t" id="f98" style="top:649.00px;font-size:16px;line-height:16px;color:#303030;left:1503px;transform:scaleX(0.9342);transform-origin:left;">Drag fields between areas below:</div>
<svg class="a" style="left:1507px;top:690px;" width="15" height="14" viewBox="0 0 15 14" ><path d="M0,0 H14 L8.5,6.5 V13.5 L5.5,11.5 V6.5 Z" fill="#777"/></svg>
<div class="a t" id="f99" style="top:691.00px;font-size:16px;line-height:16px;color:#303030;left:1530.5px;transform:scaleX(0.8723);transform-origin:left;">Filters</div>
<svg class="a" style="left:1712px;top:691px;" width="12" height="12" viewBox="0 0 12 12" ><rect x="0" y="0" width="2" height="12" fill="#888"/><rect x="3.5" y="0" width="2" height="12" fill="#888"/><rect x="7" y="0" width="2" height="12" fill="#888"/><rect x="10.5" y="0" width="1.5" height="12" fill="#888"/></svg>
<div class="a t" id="f100" style="top:691.00px;font-size:16px;line-height:16px;color:#303030;left:1734px;transform:scaleX(0.8948);transform-origin:left;">Columns</div>
<div class="a" style="left:1502px;top:713px;width:194px;height:85px;background:#fff;"></div>
<div class="a" style="left:1705px;top:713px;width:201px;height:85px;background:#fff;"></div>
<div class="a" style="left:1703px;top:687px;width:1px;height:238px;background:#d0d0d0;"></div>
<div class="a" style="left:1502px;top:805px;width:404px;height:1px;background:#d0d0d0;"></div>
<div class="a" style="left:1707px;top:714px;width:198px;height:27px;background:#fff;border:1px solid #c6c6c6;box-sizing:border-box;"></div>
<div class="a t" id="f101" style="top:721.00px;font-size:16px;line-height:16px;color:#555;left:1718px;transform:scaleX(1.2133);transform-origin:left;">Σ</div>
<div class="a t" id="f102" style="top:721.00px;font-size:16px;line-height:16px;color:#303030;left:1738px;transform:scaleX(0.9008);transform-origin:left;">Values</div>
<svg class="a" style="left:1883px;top:725px;" width="10" height="5" viewBox="0 0 10 5" ><path d="M0,0 H10 L5.0,5 Z" fill="#262626"/></svg>
<svg class="a" style="left:1508px;top:818px;" width="13" height="11" viewBox="0 0 13 11" ><rect x="0" y="0" width="12" height="1.6" fill="#888"/><rect x="0" y="3" width="12" height="1.6" fill="#888"/><rect x="0" y="6" width="12" height="1.6" fill="#888"/><rect x="0" y="9" width="12" height="1.6" fill="#888"/></svg>
<div class="a t" id="f103" style="top:817.00px;font-size:16px;line-height:16px;color:#303030;left:1530px;transform:scaleX(0.8747);transform-origin:left;">Rows</div>
<svg class="a" style="left:1712px;top:817px;" width="13" height="12" viewBox="0 0 13 12" ><text x="0" y="11.5" font-family="Liberation Sans" font-size="15" fill="#777">Σ</text></svg>
<div class="a t" id="f104" style="top:817.00px;font-size:16px;line-height:16px;color:#303030;left:1734px;transform:scaleX(0.9008);transform-origin:left;">Values</div>
<div class="a" style="left:1502px;top:839px;width:194px;height:86px;background:#fff;"></div>
<div class="a" style="left:1705px;top:839px;width:201px;height:86px;background:#fff;"></div>
<div class="a" style="left:1503px;top:842px;width:192px;height:25px;background:#fff;border:1px solid #c6c6c6;box-sizing:border-box;"></div>
<div class="a t" id="f105" style="top:847.50px;font-size:16px;line-height:16px;color:#303030;left:1512.5px;transform:scaleX(0.8531);transform-origin:left;">FINANCIAL YEAR</div>
<svg class="a" style="left:1674px;top:851px;" width="10" height="5" viewBox="0 0 10 5" ><path d="M0,0 H10 L5.0,5 Z" fill="#262626"/></svg>
<div class="a" style="left:1503px;top:870px;width:192px;height:25px;background:#fff;border:1px solid #c6c6c6;box-sizing:border-box;"></div>
<div class="a t" id="f106" style="top:875.50px;font-size:16px;line-height:16px;color:#303030;left:1512.5px;transform:scaleX(0.8545);transform-origin:left;">SALES MONTH</div>
<svg class="a" style="left:1674px;top:879px;" width="10" height="5" viewBox="0 0 10 5" ><path d="M0,0 H10 L5.0,5 Z" fill="#262626"/></svg>
<div class="a" style="left:1707px;top:842px;width:198px;height:25px;background:#fff;border:1px solid #c6c6c6;box-sizing:border-box;"></div>
<div class="a t" id="f107" style="top:847.50px;font-size:16px;line-height:16px;color:#303030;left:1716px;transform:scaleX(0.8621);transform-origin:left;">Sum of SALES</div>
<svg class="a" style="left:1883px;top:851px;" width="10" height="5" viewBox="0 0 10 5" ><path d="M0,0 H10 L5.0,5 Z" fill="#262626"/></svg>
<div class="a" style="left:1707px;top:870px;width:198px;height:25px;background:#fff;border:1px solid #c6c6c6;box-sizing:border-box;"></div>
<div class="a t" id="f108" style="top:875.50px;font-size:16px;line-height:16px;color:#303030;left:1716px;transform:scaleX(0.9346);transform-origin:left;">% Diff. from Prev. Month</div>
<svg class="a" style="left:1883px;top:879px;" width="10" height="5" viewBox="0 0 10 5" ><path d="M0,0 H10 L5.0,5 Z" fill="#262626"/></svg>
<div class="a" style="left:1707px;top:898px;width:198px;height:25px;background:#fff;border:1px solid #c6c6c6;box-sizing:border-box;"></div>
<div class="a t" id="f109" style="top:903.50px;font-size:16px;line-height:16px;color:#303030;left:1716px;transform:scaleX(0.8943);transform-origin:left;">%Diff. from Prev. Finan...</div>
<svg class="a" style="left:1883px;top:907px;" width="10" height="5" viewBox="0 0 10 5" ><path d="M0,0 H10 L5.0,5 Z" fill="#262626"/></svg>
<div class="a" style="left:1506px;top:958px;width:16px;height:16px;background:#fff;border:1px solid #5f5f5f;box-sizing:border-box;"></div>
<div class="a t" id="f110" style="top:958.00px;font-size:16px;line-height:16px;color:#303030;left:1531px;transform:scaleX(0.9278);transform-origin:left;">Defer Layout Update</div>
<div class="a" style="left:1844px;top:950px;width:62px;height:31px;background:#fdfdfd;border:1px solid #d6d6d6;box-sizing:border-box;"></div>
<div class="a t" id="f111" style="top:958.00px;font-size:16px;line-height:16px;color:#c0c0c0;left:1851px;transform:scaleX(0.9303);transform-origin:left;">Update</div>
<div class="a" style="left:1547px;top:994px;width:50px;height:26px;background:#d4d4d4;"></div>
<svg class="a" style="left:1564px;top:999px;" width="17" height="16" viewBox="0 0 17 16" ><rect x="0.8" y="0.8" width="15" height="14" fill="none" stroke="#6a6a6a" stroke-width="1.6"/><path d="M5.8,0.8 V14.8 M10.8,0.8 V14.8 M0.8,4.3 H15.8 M0.8,7.8 H15.8 M0.8,11.3 H15.8" stroke="#6a6a6a" stroke-width="1.3"/></svg>
<svg class="a" style="left:1613px;top:999px;" width="18" height="16" viewBox="0 0 18 16" ><rect x="0.6" y="0.6" width="16.2" height="14.4" fill="none" stroke="#6a6a6a" stroke-width="1.2"/><rect x="3.8" y="2.2" width="9.3" height="10.8" fill="none" stroke="#6a6a6a" stroke-width="1.1"/><path d="M5.5,5 H11.5 M5.5,7.2 H11.5 M5.5,9.4 H11.5" stroke="#6a6a6a" stroke-width="0.9"/></svg>
<svg class="a" style="left:1663px;top:999px;" width="18" height="16" viewBox="0 0 18 16" ><rect x="0.6" y="0.6" width="16.2" height="14.4" fill="none" stroke="#6a6a6a" stroke-width="1.2"/><path d="M4.3,0.6 V8.8 M8.7,0.6 V8.8 H16.8 M0.6,8.8 H4.3" fill="none" stroke="#6a6a6a" stroke-width="1.2"/></svg>
<div class="a" style="left:1704px;top:1006px;width:9px;height:1.3px;background:#505050;"></div>
<div class="a" style="left:1720px;top:1006.5px;width:125px;height:1.2px;background:#505050;"></div>
<div class="a" style="left:1782px;top:1000px;width:6px;height:13.5px;background:#444;"></div>
<div class="a" style="left:1851px;top:1006px;width:10px;height:1.3px;background:#505050;"></div>
<div class="a" style="left:1855.4px;top:1002px;width:1.3px;height:9px;background:#505050;"></div>
<div class="a t" id="f112" style="top:1001.00px;font-size:13.5px;line-height:13.5px;color:#505050;left:1878px;transform:scaleX(0.9096);transform-origin:left;">110%</div></body></html>
